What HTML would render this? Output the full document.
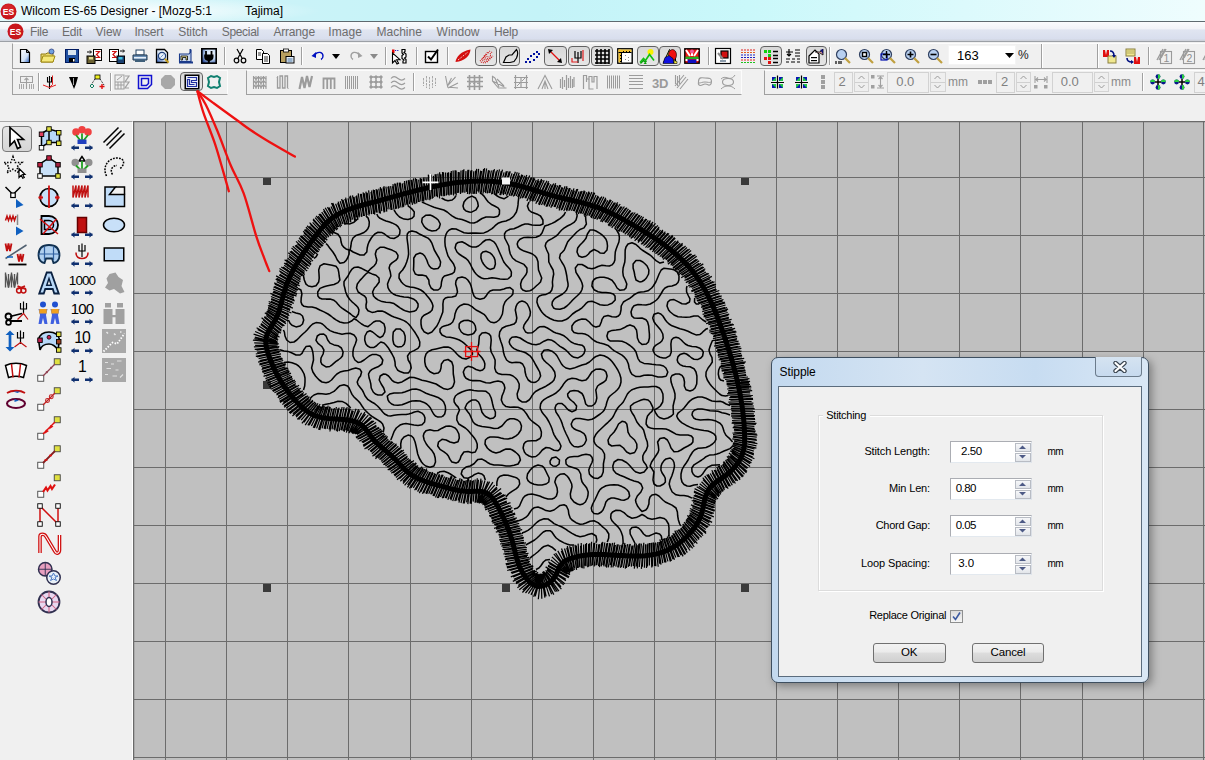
<!DOCTYPE html>
<html><head><meta charset="utf-8"><style>
*{margin:0;padding:0;box-sizing:border-box}
html,body{width:1205px;height:760px;overflow:hidden;background:#f0f0f0;font-family:"Liberation Sans",sans-serif}
.abs{position:absolute}
#title{left:0;top:0;width:1205px;height:22px;background:radial-gradient(ellipse 170px 14px at 150px 11px,rgba(255,255,255,.85),rgba(255,255,255,0)),linear-gradient(90deg,#e2f8fb 0%,#cbf3f8 22%,#c4f3f8 45%,#caf8fa 62%,#dcfafc 80%,#effdfe 100%);border-bottom:1px solid #5f6a70}
#menu{left:0;top:22px;width:1205px;height:20px;background:linear-gradient(#fafbfd 0%,#f2f3f8 35%,#e0e5f1 42%,#d8deed 90%,#cfd3dc 95%);border-bottom:1px solid #9ca0a6}
.ic{position:absolute;width:16px;height:16px;overflow:visible}
.pb{position:absolute;border:1.6px solid #626262;border-radius:4px;background:linear-gradient(#d8d8d8,#e6e6e6)}
#left{left:0;top:121px;width:133px;height:639px;background:#f0f0f0;border-right:1px solid #fff;border-top:1px solid #a8a8a8}
#canvas{left:133px;top:121px}
.dlg{position:absolute;left:771px;top:357px;width:378px;height:326px;border:1px solid #3e4f60;border-radius:7px;background:linear-gradient(90deg,#c3d9ef,#d5e4f3 40%,#c7dcf1 70%,#d9e7f5);box-shadow:3px 3px 8px rgba(0,0,0,.35)}
.tbx{position:absolute;background:#fff;border:1px solid #c6c6c6;border-top-color:#abadb3;border-left-color:#abadb3}
.spn{position:absolute;border:1px solid #c6c6c6;background:#f4f4f4}
.btn{position:absolute;border:1px solid #707070;border-radius:3px;background:linear-gradient(#f2f2f2 0%,#ebebeb 45%,#dddddd 50%,#cfcfcf 100%)}
</style></head><body>
<div id="title" class="abs"></div>
<svg class="abs" style="left:0;top:3px" width="17" height="17" viewBox="0 0 17 17"><circle cx="8.5" cy="8.5" r="8" fill="#c8161c"/><circle cx="8.5" cy="7" r="6" fill="#e0383a" opacity=".5"/><text x="8.5" y="12" font-size="8.5" font-weight="bold" fill="#fff" text-anchor="middle" font-family="Liberation Sans">ES</text></svg>
<span id="tx0" style="position:absolute;left:21.0px;top:5.0px;font-size:12px;color:#000;white-space:pre;letter-spacing:-0.012px;line-height:1;">Wilcom ES-65 Designer - [Mozg-5:1</span>
<span id="tx1" style="position:absolute;left:245.0px;top:5.0px;font-size:12px;color:#000;white-space:pre;letter-spacing:-0.002px;line-height:1;">Tajima]</span>
<div id="menu" class="abs"></div>
<svg class="abs" style="left:7px;top:23px" width="17" height="17" viewBox="0 0 17 17"><circle cx="8.5" cy="8.5" r="8" fill="#c8161c"/><text x="8.5" y="12" font-size="8.5" font-weight="bold" fill="#fff" text-anchor="middle" font-family="Liberation Sans">ES</text></svg>
<span id="tx2" style="position:absolute;left:29.9px;top:26.0px;font-size:12px;color:#6d6d6d;white-space:pre;letter-spacing:-0.286px;line-height:1;">File</span>
<span id="tx3" style="position:absolute;left:62.0px;top:26.0px;font-size:12px;color:#6d6d6d;white-space:pre;letter-spacing:-0.172px;line-height:1;">Edit</span>
<span id="tx4" style="position:absolute;left:95.6px;top:26.0px;font-size:12px;color:#6d6d6d;white-space:pre;letter-spacing:-0.049px;line-height:1;">View</span>
<span id="tx5" style="position:absolute;left:134.4px;top:26.0px;font-size:12px;color:#6d6d6d;white-space:pre;letter-spacing:-0.186px;line-height:1;">Insert</span>
<span id="tx6" style="position:absolute;left:178.3px;top:26.0px;font-size:12px;color:#6d6d6d;white-space:pre;letter-spacing:-0.136px;line-height:1;">Stitch</span>
<span id="tx7" style="position:absolute;left:221.7px;top:26.0px;font-size:12px;color:#6d6d6d;white-space:pre;letter-spacing:-0.308px;line-height:1;">Special</span>
<span id="tx8" style="position:absolute;left:273.4px;top:26.0px;font-size:12px;color:#6d6d6d;white-space:pre;letter-spacing:-0.172px;line-height:1;">Arrange</span>
<span id="tx9" style="position:absolute;left:328.3px;top:26.0px;font-size:12px;color:#6d6d6d;white-space:pre;letter-spacing:0.068px;line-height:1;">Image</span>
<span id="tx10" style="position:absolute;left:376.5px;top:26.0px;font-size:12px;color:#6d6d6d;white-space:pre;letter-spacing:-0.008px;line-height:1;">Machine</span>
<span id="tx11" style="position:absolute;left:436.6px;top:26.0px;font-size:12px;color:#6d6d6d;white-space:pre;letter-spacing:0.052px;line-height:1;">Window</span>
<span id="tx12" style="position:absolute;left:494.1px;top:26.0px;font-size:12px;color:#6d6d6d;white-space:pre;letter-spacing:-0.172px;line-height:1;">Help</span>
<div class="tbx0" style="position:absolute;left:11.5px;top:43.0px;width:1194.5px;height:26.0px;border-left:1px solid #a0a0a0;border-bottom:1px solid #a0a0a0;border-top:1px solid #fcfcfc;border-right:1px solid #fcfcfc"></div>
<div class="tbx0" style="position:absolute;left:12.0px;top:70.0px;width:216.0px;height:25.0px;border-left:1px solid #a0a0a0;border-bottom:1px solid #a0a0a0;border-top:1px solid #fcfcfc;border-right:1px solid #fcfcfc"></div>
<div class="tbx0" style="position:absolute;left:246.0px;top:70.0px;width:496.0px;height:25.0px;border-left:1px solid #a0a0a0;border-bottom:1px solid #a0a0a0;border-top:1px solid #fcfcfc;border-right:1px solid #fcfcfc"></div>
<div class="tbx0" style="position:absolute;left:764.0px;top:70.0px;width:442.0px;height:25.0px;border-left:1px solid #a0a0a0;border-bottom:1px solid #a0a0a0;border-top:1px solid #fcfcfc;border-right:1px solid #fcfcfc"></div>
<div style="position:absolute;left:223.5px;top:47.0px;width:1px;height:18.0px;background:#a0a0a0;box-shadow:1px 0 0 #fff"></div>
<div style="position:absolute;left:300.5px;top:47.0px;width:1px;height:18.0px;background:#a0a0a0;box-shadow:1px 0 0 #fff"></div>
<div style="position:absolute;left:385.0px;top:47.0px;width:1px;height:18.0px;background:#a0a0a0;box-shadow:1px 0 0 #fff"></div>
<div style="position:absolute;left:416.0px;top:47.0px;width:1px;height:18.0px;background:#a0a0a0;box-shadow:1px 0 0 #fff"></div>
<div style="position:absolute;left:447.0px;top:47.0px;width:1px;height:18.0px;background:#a0a0a0;box-shadow:1px 0 0 #fff"></div>
<div style="position:absolute;left:708.0px;top:47.0px;width:1px;height:18.0px;background:#a0a0a0;box-shadow:1px 0 0 #fff"></div>
<div style="position:absolute;left:829.0px;top:47.0px;width:1px;height:18.0px;background:#a0a0a0;box-shadow:1px 0 0 #fff"></div>
<div style="position:absolute;left:1041.0px;top:44.0px;width:1px;height:24.0px;background:#a0a0a0;box-shadow:1px 0 0 #fff"></div>
<div style="position:absolute;left:1097.0px;top:44.0px;width:1px;height:24.0px;background:#a0a0a0;box-shadow:1px 0 0 #fff"></div>
<div style="position:absolute;left:1148.0px;top:47.0px;width:1px;height:18.0px;background:#a0a0a0;box-shadow:1px 0 0 #fff"></div>
<div style="position:absolute;left:38.0px;top:73.0px;width:1px;height:18.0px;background:#a0a0a0;box-shadow:1px 0 0 #fff"></div>
<div style="position:absolute;left:109.5px;top:73.0px;width:1px;height:18.0px;background:#a0a0a0;box-shadow:1px 0 0 #fff"></div>
<div style="position:absolute;left:412.5px;top:73.0px;width:1px;height:18.0px;background:#a0a0a0;box-shadow:1px 0 0 #fff"></div>
<div style="position:absolute;left:1141.5px;top:73.0px;width:1px;height:18.0px;background:#a0a0a0;box-shadow:1px 0 0 #fff"></div>
<div class="pb" style="left:475.3px;top:45.5px;width:22.2px;height:20.5px"></div>
<div class="pb" style="left:498.6px;top:45.5px;width:21.9px;height:20.5px"></div>
<div class="pb" style="left:544.0px;top:45.5px;width:22.5px;height:20.5px"></div>
<div class="pb" style="left:567.5px;top:45.5px;width:22.0px;height:20.5px"></div>
<div class="pb" style="left:590.5px;top:45.5px;width:22.5px;height:20.5px"></div>
<div class="pb" style="left:636.5px;top:45.5px;width:22.0px;height:20.5px"></div>
<div class="pb" style="left:659.3px;top:45.5px;width:22.2px;height:20.5px"></div>
<div class="pb" style="left:760.0px;top:45.5px;width:21.5px;height:20.5px"></div>
<div class="pb" style="left:805.8px;top:45.5px;width:21.7px;height:20.5px"></div>
<div class="pb" style="left:180.3px;top:71.9px;width:22.4px;height:18.9px"></div>
<div class="abs" style="left:23px;top:126px;width:31px;height:26px"></div>
<svg class="ic" style="left:17px;top:48px;width:16px;height:16px" viewBox="0 0 16 16"><defs><linearGradient id="gnew" x1="0" y1="0" x2="1" y2="1"><stop offset="0" stop-color="#fff"/><stop offset=".6" stop-color="#cfe0f5"/><stop offset="1" stop-color="#2a60c0"/></linearGradient></defs><path d="M3.5 1.5h6l3 3v10h-9z" fill="url(#gnew)" stroke="#000" stroke-width="1.2"/><path d="M9.5 1.5v3h3" fill="none" stroke="#000"/></svg>
<svg class="ic" style="left:40px;top:48px;width:16px;height:16px" viewBox="0 0 16 16"><path d="M1 6h5l1-1h6v9H1z" fill="#e8d870" stroke="#907a10"/><path d="M1 14l2-6h12l-2 6z" fill="#f5e87a" stroke="#a08a10"/><circle cx="11.5" cy="3.5" r="2.5" fill="#6fa0e0" stroke="#304080" stroke-width=".8"/></svg>
<svg class="ic" style="left:64px;top:48px;width:16px;height:16px" viewBox="0 0 16 16"><rect x="1.5" y="1.5" width="13" height="13" fill="#2050a0" stroke="#001a60"/><rect x="4" y="2" width="8" height="5" fill="#d8e4f0"/><rect x="5" y="10" width="6" height="4" fill="#000"/><rect x="9" y="11" width="1.5" height="2.5" fill="#fff"/></svg>
<svg class="ic" style="left:86px;top:48px;width:16px;height:16px" viewBox="0 0 16 16"><rect x="7.5" y="1.5" width="8" height="11" fill="#fff" stroke="#000"/><path d="M9.5 3.5h4l-3 3 3 3h-4" fill="none" stroke="#d01010" stroke-width="1.2"/><rect x="1" y="8" width="8" height="7.5" fill="#6a6030" stroke="#000"/><rect x="3" y="9" width="4" height="2.5" fill="#e0d890"/><path d="M1 4h4M4 2.5l1.5 1.5L4 5.5" stroke="#000" fill="none"/></svg>
<svg class="ic" style="left:109px;top:48px;width:16px;height:16px" viewBox="0 0 16 16"><rect x="0.5" y="1.5" width="9" height="12" fill="#fff" stroke="#000"/><path d="M3 3.5h4l-3 3 3 3H3" fill="none" stroke="#d01010" stroke-width="1.2"/><rect x="8" y="8" width="7.5" height="7.5" fill="#1a4070" stroke="#000"/><rect x="9.5" y="9" width="4" height="2.5" fill="#40c0e0"/><path d="M11 3h4M14 1.5l1.5 1.5L14 4.5" stroke="#000" fill="none"/></svg>
<svg class="ic" style="left:132px;top:48px;width:16px;height:16px" viewBox="0 0 16 16"><rect x="4" y="2" width="8" height="5" fill="#fff" stroke="#204060"/><path d="M1 7h14v5H1z" fill="#6a90b8" stroke="#203850"/><rect x="2" y="9" width="12" height="1.5" fill="#e8f0f8"/><rect x="3" y="12" width="10" height="2" fill="#40607a"/></svg>
<svg class="ic" style="left:155px;top:48px;width:16px;height:16px" viewBox="0 0 16 16"><defs><linearGradient id="gpv" x1="1" y1="0" x2="0" y2="1"><stop offset="0" stop-color="#ffffff"/><stop offset=".55" stop-color="#d8e6f6"/><stop offset="1" stop-color="#2a5ab8"/></linearGradient></defs><path d="M1.5 1.5h8l3 3v10h-11z" fill="url(#gpv)" stroke="#000" stroke-width="1.3"/><circle cx="7" cy="8" r="3.6" fill="#e8f0fa" stroke="#20407a" stroke-width="1.2"/><path d="M5.5 9.5l3-3" stroke="#5080c0" stroke-width=".8"/><path d="M9.8 10.8l3.8 3.8" stroke="#c8a020" stroke-width="2"/></svg>
<svg class="ic" style="left:178px;top:48px;width:16px;height:16px" viewBox="0 0 16 16"><path d="M1 13.5h14v2H1z" fill="#1a3a8a"/><path d="M1.5 6h9.5l2-3v10.5H1.5z" fill="#c8d8f0" stroke="#1a3a8a" stroke-width="1.1"/><path d="M3 8h6.5v4H8V9.5H4.5V12H3z" fill="#f8f0a0" stroke="#000" stroke-width=".8"/><rect x="11.5" y="1" width="1.6" height="3" fill="#1a3a8a"/></svg>
<svg class="ic" style="left:201px;top:48px;width:16px;height:16px" viewBox="0 0 16 16"><defs><radialGradient id="gpl" cx=".65" cy=".35" r=".8"><stop offset="0" stop-color="#ffffff"/><stop offset=".5" stop-color="#c0d8f4"/><stop offset="1" stop-color="#1a3a8a"/></radialGradient></defs><rect x="0.8" y="0.8" width="14.4" height="14.4" fill="url(#gpl)" stroke="#000" stroke-width="1.6"/><path d="M5 3v4M10.5 3v4" stroke="#000" stroke-width="1.8"/><path d="M3.2 6.5h9.3v2.5c0 2.5-2 4-4.6 4s-4.7-1.5-4.7-4z" fill="#000"/><rect x="6.8" y="12" width="2" height="3" fill="#000"/></svg>
<svg class="ic" style="left:232px;top:48px;width:16px;height:16px" viewBox="0 0 16 16"><path d="M5 1l5 9M11 1l-5 9" stroke="#000" stroke-width="1.2" fill="none"/><circle cx="4.5" cy="12.5" r="2.3" fill="none" stroke="#000" stroke-width="1.2"/><circle cx="11.5" cy="12.5" r="2.3" fill="none" stroke="#000" stroke-width="1.2"/></svg>
<svg class="ic" style="left:255px;top:48px;width:16px;height:16px" viewBox="0 0 16 16"><path d="M1.5 1.5h5l2 2v8h-7z" fill="#fff" stroke="#000"/><path d="M7.5 5.5h5l2 2v8h-7z" fill="#fff" stroke="#000"/><path d="M3 5h3M3 7h3M9 9h4M9 11h4M9 13h4" stroke="#000" stroke-width=".8"/></svg>
<svg class="ic" style="left:279px;top:48px;width:16px;height:16px" viewBox="0 0 16 16"><rect x="1.5" y="2.5" width="11" height="12" fill="#b8a060" stroke="#000"/><rect x="4.5" y="1" width="5" height="3" fill="#fff" stroke="#000" stroke-width=".8"/><rect x="7" y="8.5" width="8" height="6.5" fill="#e8f0f8" stroke="#000"/><path d="M8.5 11h5M8.5 13h5" stroke="#4070a0"/></svg>
<svg class="ic" style="left:310px;top:48px;width:16px;height:16px" viewBox="0 0 16 16"><path d="M5 6.5C8 3 13 4 13 8c0 2-1 3-2 3.5" fill="none" stroke="#0010c0" stroke-width="1.4"/><path d="M1.5 8L6 4v6z" fill="#0010c0"/></svg>
<svg class="ic" style="left:328px;top:48px;width:16px;height:16px" viewBox="0 0 16 16"><path d="M4 6h8l-4 5z" fill="#000"/></svg>
<svg class="ic" style="left:348px;top:48px;width:16px;height:16px" viewBox="0 0 16 16"><path d="M11 6.5C8 3 3 4 3 8c0 2 1 3 2 3.5" fill="none" stroke="#a0a0a0" stroke-width="1.4"/><path d="M14.5 8L10 4v6z" fill="#a0a0a0"/></svg>
<svg class="ic" style="left:366px;top:48px;width:16px;height:16px" viewBox="0 0 16 16"><path d="M4 6h8l-4 5z" fill="#8a8a8a"/></svg>
<svg class="ic" style="left:392px;top:48px;width:16px;height:16px" viewBox="0 0 16 16"><rect x="0" y="1.5" width="2.5" height="3.5" fill="#e00000"/><path d="M3 2.5h4" stroke="#2020c0" stroke-width="1" stroke-dasharray="1.2 1"/><path d="M0.5 5v10l2.5-2.5 2 3.5 1.6-.8-2-3.5h3.4z" fill="#fff" stroke="#000" stroke-width="1.1"/><path d="M10 1.5h3v2l-1 1 2 1.5v3l-1.5 1 1.5 1.5v3.5h-3v-2l1-1-2-1.5v-3l1.5-1-1.5-1.5z" fill="#fff" stroke="#000" stroke-width="1.2"/></svg>
<svg class="ic" style="left:424px;top:48px;width:16px;height:16px" viewBox="0 0 16 16"><rect x="1.5" y="3.5" width="12" height="11" fill="#fff" stroke="#000" stroke-width="1.4"/><path d="M4 8.5l3 3 7-10" fill="none" stroke="#000" stroke-width="2"/></svg>
<svg class="ic" style="left:455px;top:48px;width:16px;height:16px" viewBox="0 0 16 16"><path d="M0.5 14C1 9 6 3 15.5 1.5 15 8 10 13 0.5 14z" fill="#d41010"/><path d="M3 12L13 4" stroke="#fff" stroke-width="1" stroke-dasharray="1 1.2"/></svg>
<svg class="ic" style="left:478px;top:48px;width:16px;height:16px" viewBox="0 0 16 16"><g stroke="#d01818" stroke-width="1.1" stroke-dasharray="1 1"><path d="M2 13L7 8M3 14.5l7-7M5 15l8-8M7 15l7-7M9 14l6-6M4 11l5-5M6 8l4-4M10 5l2-2M12 6l2-2"/></g></svg>
<svg class="ic" style="left:502px;top:48px;width:16px;height:16px" viewBox="0 0 16 16"><path d="M1.5 14.5L4 9l3-2 3 0 4.5-5.5c1.5 2 1.5 5 0 8.5L12 13.5 8 14.5z" fill="none" stroke="#000" stroke-width="1.2"/></svg>
<svg class="ic" style="left:524px;top:48px;width:16px;height:16px" viewBox="0 0 16 16"><g fill="#0010a0"><rect x="1" y="13" width="2" height="2"/><rect x="3" y="10" width="2" height="2"/><rect x="5" y="13" width="2" height="2"/><rect x="6" y="7" width="2" height="2"/><rect x="9" y="11" width="2" height="2"/><rect x="9" y="5" width="2" height="2"/><rect x="12" y="8" width="2" height="2"/><rect x="12" y="3" width="2" height="2"/><rect x="14" y="5" width="2" height="2"/></g></svg>
<svg class="ic" style="left:547px;top:48px;width:16px;height:16px" viewBox="0 0 16 16"><path d="M3 3l10 10" stroke="#e01010" stroke-width="1.2"/><path d="M1 1l5 1-4 4zM15 15l-5-1 4-4z" fill="#000"/></svg>
<svg class="ic" style="left:570px;top:48px;width:16px;height:16px" viewBox="0 0 16 16"><path d="M8 4v11M5 3v7h6V3" fill="none" stroke="#000" stroke-width="1.2"/><path d="M2 10v4h6M13 2v11" fill="none" stroke="#e02020" stroke-width="1.2"/></svg>
<svg class="ic" style="left:594px;top:48px;width:16px;height:16px" viewBox="0 0 16 16"><g stroke="#000" stroke-width="1.6"><path d="M1 3h14M1 7h14M1 11h14M1 15h14M3 1v15M7 1v15M11 1v15M15 1v15"/></g></svg>
<svg class="ic" style="left:617px;top:48px;width:16px;height:16px" viewBox="0 0 16 16"><rect x="0.8" y="0.8" width="14.4" height="14.4" fill="#fff" stroke="#000" stroke-width="1.4"/><rect x="1.5" y="1.5" width="13" height="2.5" fill="#f0c030"/><rect x="1.5" y="1.5" width="2.5" height="13" fill="#f0c030"/><path d="M1.5 4.5h13M4.5 4.5v10" stroke="#000" stroke-width="1"/><g fill="#000"><rect x="6" y="3" width="1" height="1"/><rect x="9" y="3" width="1" height="1"/><rect x="12" y="3" width="1" height="1"/><rect x="3" y="7" width="1" height="1"/><rect x="3" y="10" width="1" height="1"/><rect x="3" y="13" width="1" height="1"/></g><g fill="#888"><rect x="8" y="7" width="1" height="1"/><rect x="11" y="9" width="1" height="1"/><rect x="8" y="11" width="1" height="1"/><rect x="11" y="12" width="1" height="1"/></g></svg>
<svg class="ic" style="left:639px;top:48px;width:16px;height:16px" viewBox="0 0 16 16"><circle cx="11.5" cy="4" r="3" fill="#f8f000"/><path d="M1 14.5l3.5-4 2 2 4-6 4.5 6" fill="none" stroke="#10c010" stroke-width="1.6"/><path d="M1.5 15.5l3-3 3 3M5 15.5l2.5-2.5" fill="none" stroke="#08a008" stroke-width="1.4"/></svg>
<svg class="ic" style="left:662px;top:48px;width:16px;height:16px" viewBox="0 0 16 16"><path d="M1.5 14.5l6-13 6 9v4z" fill="#f8f040" stroke="#000" stroke-width="1"/><ellipse cx="10.5" cy="7" rx="4" ry="5.5" fill="#f01010" stroke="#000" stroke-width=".6"/><path d="M1 15.5l2-6 4-2 4 3 1 5z" fill="#1010e0" stroke="#000" stroke-width=".6"/><path d="M12 12.5l3 1v2h-3z" fill="#f8f040" stroke="#000" stroke-width=".6"/></svg>
<svg class="ic" style="left:684px;top:48px;width:16px;height:16px" viewBox="0 0 16 16"><rect x="0.8" y="0.8" width="14.4" height="14.4" fill="#f01818" stroke="#000" stroke-width="1.4"/><path d="M2 2l4 6M14 2l-4 6M8 2v6" stroke="#fff" stroke-width="2"/><circle cx="8" cy="3.5" r="2" fill="#f060a0"/><path d="M1.5 9c2-1 4 0 6.5 0s4.5-1 6.5 0v2H1.5z" fill="#20b020"/><path d="M3 11.5h10l-1 3.5H4z" fill="#1010c0"/><path d="M1.5 12h2M12.5 12h2" stroke="#fff" stroke-width="2"/></svg>
<svg class="ic" style="left:715px;top:48px;width:16px;height:16px" viewBox="0 0 16 16"><rect x="0.5" y="0.5" width="15" height="15" fill="#fff" stroke="#000" stroke-width="1.2"/><rect x="6" y="3" width="7" height="7" fill="#d01010" stroke="#000" stroke-width="1.2"/><path d="M3 5l5 6" stroke="#888" stroke-width="2"/><rect x="5" y="12" width="6" height="2" fill="#8a9aaa"/></svg>
<svg class="ic" style="left:740px;top:48px;width:16px;height:16px" viewBox="0 0 16 16"><g stroke-width="1.2" stroke-dasharray="2 1"><path d="M1 2h14" stroke="#e02020"/><path d="M1 4.5h14" stroke="#e06020"/><path d="M1 7h14" stroke="#2020c0"/><path d="M1 9.5h14" stroke="#2020c0"/><path d="M1 12h14" stroke="#e02020"/><path d="M1 14.5h14" stroke="#20c020"/></g></svg>
<svg class="ic" style="left:763px;top:48px;width:16px;height:16px" viewBox="0 0 16 16"><rect x="1" y="2" width="3" height="3" fill="#10d010"/><rect x="5" y="2" width="3" height="3" fill="#10d010"/><rect x="5" y="6" width="3" height="3" fill="#10d010"/><rect x="1" y="9" width="3" height="3" fill="#e01010"/><rect x="5" y="9" width="3" height="3" fill="#e01010"/><rect x="5" y="13" width="3" height="3" fill="#e01010"/><path d="M10 3.5h5M10 7.5h5M10 10.5h5M10 14.5h5" stroke="#000" stroke-width="1.4"/></svg>
<svg class="ic" style="left:785px;top:48px;width:16px;height:16px" viewBox="0 0 16 16"><path d="M1 4h7M4 1v7M2 6l2 2 2-2M1 11h4M7 11h3M12 11h3M1 14h3M6 14h4M12 14h3M10 2h5M10 5h5M10 8h5" stroke="#000" stroke-width="1.2" fill="none"/></svg>
<svg class="ic" style="left:808px;top:48px;width:16px;height:16px" viewBox="0 0 16 16"><path d="M1 8l6-6 4 4v9H1z" fill="#fff" stroke="#000" stroke-width="1.2"/><rect x="3" y="9" width="6" height="1.2" fill="#000"/><rect x="3" y="12" width="6" height="1.2" fill="#000"/><path d="M7 4h5l3-3v6l-3-2" fill="#e8a0a0" stroke="#000" stroke-width=".8"/><path d="M12 2l3-1v5z" fill="#101070"/></svg>
<svg class="ic" style="left:835px;top:48px;width:16px;height:16px" viewBox="0 0 16 16"><circle cx="6.5" cy="6.5" r="5" fill="#b8d0f0" stroke="#304060" stroke-width="1.2"/><path d="M1 13v3M4 13v3M6 13v3" stroke="#000" stroke-width="1.2"/><path d="M10 10l5 5" stroke="#c0a040" stroke-width="2.2"/></svg>
<svg class="ic" style="left:858px;top:48px;width:16px;height:16px" viewBox="0 0 16 16"><circle cx="6.5" cy="6.5" r="5" fill="#b8d0f0" stroke="#304060" stroke-width="1.2"/><rect x="4.5" y="4.5" width="4" height="4" fill="#fff" stroke="#000" stroke-width="1.4"/><path d="M10 10l5 5" stroke="#c0a040" stroke-width="2.2"/></svg>
<svg class="ic" style="left:880px;top:48px;width:16px;height:16px" viewBox="0 0 16 16"><circle cx="6.5" cy="6.5" r="5" fill="#b8d0f0" stroke="#304060" stroke-width="1.2"/><rect x="1" y="6" width="6" height="6" fill="none" stroke="#0010b0" stroke-width="1.2"/><path d="M6.5 3v7M3 6.5h7" stroke="#000" stroke-width="1.4"/><path d="M10 10l5 5" stroke="#c0a040" stroke-width="2.2"/></svg>
<svg class="ic" style="left:904px;top:48px;width:16px;height:16px" viewBox="0 0 16 16"><circle cx="6.5" cy="6.5" r="5" fill="#b8d0f0" stroke="#304060" stroke-width="1.2"/><path d="M6.5 3.5v6M3.5 6.5h6" stroke="#000" stroke-width="1.6"/><path d="M10 10l5 5" stroke="#c0a040" stroke-width="2.2"/></svg>
<svg class="ic" style="left:927px;top:48px;width:16px;height:16px" viewBox="0 0 16 16"><circle cx="6.5" cy="6.5" r="5" fill="#b8d0f0" stroke="#304060" stroke-width="1.2"/><path d="M3.5 6.5h6" stroke="#000" stroke-width="1.6"/><path d="M10 10l5 5" stroke="#c0a040" stroke-width="2.2"/></svg>
<svg class="ic" style="left:1102px;top:48px;width:16px;height:16px" viewBox="0 0 16 16"><path d="M1 2h2l1 5 1-5h2v7H1z" fill="#e01010"/><rect x="6" y="8" width="8" height="7" fill="#f0e890" stroke="#8a8040"/><path d="M8 3c3 0 4 2 4 5" fill="none" stroke="#001080" stroke-width="1.6"/><path d="M10 7h4l-2 3z" fill="#001080"/></svg>
<svg class="ic" style="left:1125px;top:48px;width:16px;height:16px" viewBox="0 0 16 16"><rect x="1" y="1" width="9" height="7" fill="#f0e890" stroke="#8a8040"/><path d="M2 3h7M2 5h7" stroke="#8a8040" stroke-width=".6"/><path d="M9 9h2l1 5 1-5h2v7H9z" fill="#e01010"/><path d="M2 10c0 3 2 4 5 4" fill="none" stroke="#001080" stroke-width="1.6"/><path d="M6 12v4l3-2z" fill="#001080"/></svg>
<svg class="ic" style="left:1156px;top:48px;width:16px;height:16px" viewBox="0 0 16 16"><rect x="4.5" y="3.5" width="11" height="12" fill="none" stroke="#9a9a9a" stroke-width="1.1"/><path d="M1 12L7 1M3 12l6-11M5 10l5-9" stroke="#9c9c9c" stroke-width="1.4"/><text x="10.3" y="14" font-size="10.5" fill="#909090" text-anchor="middle" font-family="Liberation Sans">1</text></svg>
<svg class="ic" style="left:1179px;top:48px;width:16px;height:16px" viewBox="0 0 16 16"><rect x="4.5" y="3.5" width="11" height="12" fill="none" stroke="#9a9a9a" stroke-width="1.1"/><path d="M1 12L7 1M3 12l6-11M5 10l5-9" stroke="#9c9c9c" stroke-width="1.4"/><text x="10.3" y="14" font-size="10.5" fill="#909090" text-anchor="middle" font-family="Liberation Sans">2</text></svg>
<svg class="ic" style="left:1202px;top:48px;width:16px;height:16px" viewBox="0 0 16 16"><rect x="4.5" y="3.5" width="11" height="12" fill="none" stroke="#9a9a9a" stroke-width="1.1"/><path d="M1 12L7 1M3 12l6-11M5 10l5-9" stroke="#9c9c9c" stroke-width="1.4"/><text x="10.3" y="14" font-size="10.5" fill="#909090" text-anchor="middle" font-family="Liberation Sans">1</text></svg>
<svg class="ic" style="left:18px;top:74px;width:16px;height:16px" viewBox="0 0 16 16"><rect x="2.5" y="2.5" width="12" height="6" fill="none" stroke="#a0a0a0"/><path d="M8.5 4v11M6.5 6l2-2 2 2" fill="none" stroke="#a0a0a0" stroke-width="1.1"/><path d="M1.5 10v5M3.5 10v5M5.5 10v5M11.5 10v5M13.5 10v5M15.5 10v5" stroke="#a8a8a8" stroke-width="1"/></svg>
<svg class="ic" style="left:42px;top:74px;width:16px;height:16px" viewBox="0 0 16 16"><path d="M7.5 2v13M5.5 3v5h4V3" fill="none" stroke="#000" stroke-width="1.1"/><path d="M10.5 1.5v9l-3 3M1 11l6.5 2.5M14 11l-6.5 2.5" fill="none" stroke="#e02020" stroke-width="1"/></svg>
<svg class="ic" style="left:66px;top:74px;width:16px;height:16px" viewBox="0 0 16 16"><path d="M3 3h9l-2 7-2 5-2-5z" fill="#000"/><path d="M7.5 4v7" stroke="#aaa" stroke-width="1"/></svg>
<svg class="ic" style="left:89px;top:74px;width:16px;height:16px" viewBox="0 0 16 16"><rect x="6" y="1" width="5" height="4" fill="#f0f020" stroke="#000" stroke-width=".8"/><path d="M6 5l-4 6M11 5l4 6" stroke="#000" stroke-width="1" stroke-dasharray="1 1"/><path d="M1 12l2-2 2 2-2 2z" fill="none" stroke="#108060"/><path d="M13 10v5M10.5 12.5h5" stroke="#e01010" stroke-width="1.4"/></svg>
<svg class="ic" style="left:114px;top:74px;width:16px;height:16px" viewBox="0 0 16 16"><rect x="1" y="1" width="9" height="14" fill="none" stroke="#a0a0a0"/><path d="M1 8h9M1 11h9M4 8v7M7 8v7M3 6l5-4" stroke="#a0a0a0"/><path d="M11 2h4l-4 6h4l-4 6h4" fill="none" stroke="#a0a0a0" stroke-width="1.2"/></svg>
<svg class="ic" style="left:137px;top:74px;width:16px;height:16px" viewBox="0 0 16 16"><path d="M1.5 1.5h13v9l-4 4h-9z" fill="none" stroke="#1010d0" stroke-width="1.5"/><path d="M4.5 4.5h7v5l-2 2h-5z" fill="none" stroke="#1010d0" stroke-width="1.5"/></svg>
<svg class="ic" style="left:160px;top:74px;width:16px;height:16px" viewBox="0 0 16 16"><path d="M5 1h6l4 4v6l-4 4H5l-4-4V5z" fill="#a8a8a8"/></svg>
<svg class="ic" style="left:184px;top:74px;width:16px;height:16px" viewBox="0 0 16 16"><rect x="0.5" y="0.5" width="15" height="15" fill="#000"/><rect x="2" y="2" width="12" height="12" fill="#e8ecf8"/><path d="M3.5 3.5h9v3h-5v2h5v4h-9V5.5h2v5h5" fill="none" stroke="#2030a0" stroke-width="1.2"/></svg>
<svg class="ic" style="left:206px;top:74px;width:16px;height:16px" viewBox="0 0 16 16"><path d="M2 4l3-2 3 1 3-1 3 2-1 4 1 4-3 2-3-1-3 1-3-2 1-4z" fill="none" stroke="#108070" stroke-width="2"/></svg>
<svg class="ic" style="left:252px;top:74px;width:16px;height:16px" viewBox="0 0 16 16"><g fill="none" stroke="#9c9c9c" stroke-width="1.1"><path d="M1.5 2v13M4 2v13M6.5 2v13M9 2v13M11.5 2v13M14 2v13"/><path d="M1.5 3l2.5 2 2.5-2 2.5 2 2.5-2 2.5 2M1.5 7l2.5 2 2.5-2 2.5 2 2.5-2 2.5 2M1.5 11l2.5 2 2.5-2 2.5 2 2.5-2 2.5 2" stroke-width="1.6"/></g></svg>
<svg class="ic" style="left:275px;top:74px;width:16px;height:16px" viewBox="0 0 16 16"><path d="M2.5 3v11h2.5V2h2.5v12h2.5V2h2.5v12" fill="none" stroke="#9c9c9c" stroke-width="1.3"/><path d="M2 3.5l1 -1.5M12.5 14l1 1" stroke="#9c9c9c"/></svg>
<svg class="ic" style="left:298px;top:74px;width:16px;height:16px" viewBox="0 0 16 16"><path d="M1.5 15l2.5-12 2.5 11 2.5-12 2.5 11 2.5-11" fill="none" stroke="#9c9c9c" stroke-width="2.2"/></svg>
<svg class="ic" style="left:321px;top:74px;width:16px;height:16px" viewBox="0 0 16 16"><path d="M2.5 15V4.5h11V15M6.2 4.5V15M9.8 4.5V15" fill="none" stroke="#9c9c9c" stroke-width="1.8"/></svg>
<svg class="ic" style="left:344px;top:74px;width:16px;height:16px" viewBox="0 0 16 16"><path d="M1.5 2v13M3.5 2v13M5.5 2v13M7.5 2v13M9.5 2v13M11.5 2v13M13.5 2v13" stroke="#9c9c9c" stroke-width="1"/></svg>
<svg class="ic" style="left:368px;top:74px;width:16px;height:16px" viewBox="0 0 16 16"><g fill="#9c9c9c"><path d="M3 1l2 2-2 2-2-2zM8 1l2 2-2 2-2-2zM13 1l2 2-2 2-2-2zM3 6l2 2-2 2-2-2zM8 6l2 2-2 2-2-2zM13 6l2 2-2 2-2-2zM3 11l2 2-2 2-2-2zM8 11l2 2-2 2-2-2zM13 11l2 2-2 2-2-2z"/><path d="M2 2.3h12v1.4H2zM2 7.3h12v1.4H2zM2 12.3h12v1.4H2zM2.3 2h1.4v12H2.3zM7.3 2h1.4v12H7.3zM12.3 2h1.4v12h-1.4z"/></g></svg>
<svg class="ic" style="left:390px;top:74px;width:16px;height:16px" viewBox="0 0 16 16"><path d="M1 4.5C3 2 5 2 8 4.5s5 2 7 0M1 9C3 6.5 5 6.5 8 9s5 2 7 0M1 13.5C3 11 5 11 8 13.5s5 2 7 0" fill="none" stroke="#9c9c9c" stroke-width="1.1"/></svg>
<svg class="ic" style="left:421px;top:74px;width:16px;height:16px" viewBox="0 0 16 16"><path d="M2.5 4v8M5.5 2v12M8.5 3v12M11.5 2v12M14.5 4v8" stroke="#a8a8a8" stroke-width="1" stroke-dasharray="2.5 1"/></svg>
<svg class="ic" style="left:444px;top:74px;width:16px;height:16px" viewBox="0 0 16 16"><path d="M1.5 2l2 10 4-8M3.5 12l8-9M4 14l10-5M3 13l11 1" fill="none" stroke="#9c9c9c" stroke-width="1.1"/></svg>
<svg class="ic" style="left:467px;top:74px;width:16px;height:16px" viewBox="0 0 16 16"><path d="M0 3.5h16M0 7.5h16M0 12.5h16M2.5 1v15M7.5 1v15M12.5 1v15" stroke="#9c9c9c" stroke-width="1.6"/><path d="M3 10l2-3 2 3 2-3 2 3 2-3" fill="none" stroke="#9c9c9c"/></svg>
<svg class="ic" style="left:491px;top:74px;width:16px;height:16px" viewBox="0 0 16 16"><path d="M1.5 2v5l6 7h8M1.5 7l12 6M4 4l4 9M1 2l3 2M6 5l7 7" fill="none" stroke="#9c9c9c" stroke-width="1.1"/></svg>
<svg class="ic" style="left:513px;top:74px;width:16px;height:16px" viewBox="0 0 16 16"><path d="M2.5 1v14M13.5 1v14M1 3.5h14M1 8.5h14M1 13.5h14M8 3v11" fill="none" stroke="#9c9c9c" stroke-width="1.2"/><path d="M4 12l3-3M9 7l3-3" stroke="#9c9c9c"/></svg>
<svg class="ic" style="left:537px;top:74px;width:16px;height:16px" viewBox="0 0 16 16"><path d="M1 15L8 1.5 15 15M5 15l3-8 3 8M8 7v8" fill="none" stroke="#9c9c9c" stroke-width="1.1"/></svg>
<svg class="ic" style="left:559px;top:74px;width:16px;height:16px" viewBox="0 0 16 16"><path d="M1.5 5v9M3.5 3v12M5.5 6v7M7.5 1v15M9.5 4v10M11.5 2v12M13.5 5v9M15 3v10" stroke="#9c9c9c" stroke-width="1.2"/></svg>
<svg class="ic" style="left:582px;top:74px;width:16px;height:16px" viewBox="0 0 16 16"><path d="M1.5 15V1.5h3V8M4.5 5h2.5V2.5h3V8h2V2.5h3V15" fill="none" stroke="#9c9c9c" stroke-width="1.2"/><path d="M7 5v10h4.5" fill="none" stroke="#9c9c9c" stroke-width="1.2"/></svg>
<svg class="ic" style="left:605px;top:74px;width:16px;height:16px" viewBox="0 0 16 16"><path d="M2.5 1.5v13M4.5 1.5v13M6.5 1.5v13M8.5 1.5v13M10.5 1.5v13M12.5 1.5v13M14.5 1.5v13" stroke="#9c9c9c" stroke-width="1"/></svg>
<svg class="ic" style="left:628px;top:74px;width:16px;height:16px" viewBox="0 0 16 16"><path d="M1 1.5h14M1 4.5h14M1 7.5h14M1 10.5h14M1 14.5h14" stroke="#9c9c9c" stroke-width="1.1"/></svg>
<svg class="ic" style="left:652px;top:74px;width:16px;height:16px" viewBox="0 0 16 16"><text x="8" y="14" font-size="13" font-weight="bold" fill="#9a9a9a" text-anchor="middle" font-family="Liberation Sans" letter-spacing="-.3">3D</text></svg>
<svg class="ic" style="left:674px;top:74px;width:16px;height:16px" viewBox="0 0 16 16"><path d="M1.5 1v9M3.5 2v10M5.5 1v9M1 12l9-11M3 14l9-11M6 15l8-10" fill="none" stroke="#9c9c9c" stroke-width="1.1"/></svg>
<svg class="ic" style="left:697px;top:74px;width:16px;height:16px" viewBox="0 0 16 16"><path d="M1.5 7.5C1.5 3 5 3.5 8 4s6.5-1 6.5 3.5c0 3-2 4-3 3.5s-2-1-3.5-1-3 1.5-4.5 1.5-2.5-1-2-4z" fill="none" stroke="#9c9c9c" stroke-width="1.1"/><path d="M2 9c2 0 3-1 6-1s4 1 6 0" fill="none" stroke="#9c9c9c"/></svg>
<svg class="ic" style="left:720px;top:74px;width:16px;height:16px" viewBox="0 0 16 16"><path d="M2.5 8c0-3 2.5-3.5 5.5-3.5s5.5.5 5.5 3.5-2.5 3.5-5.5 3.5-5.5-.5-5.5-3.5z" fill="none" stroke="#9c9c9c" stroke-width="1.1"/><path d="M1 5c2-2 4-2 7-1s5 0 7-3M1 15c2-2 4-3 7-3s5 1 7 3" fill="none" stroke="#9c9c9c"/></svg>
<svg class="ic" style="left:770px;top:74px;width:16px;height:16px" viewBox="0 0 16 16"><rect x="2" y="3" width="4" height="4" fill="#0a14b4"/><path d="M2 7h4v-4z" fill="#22c846"/><rect x="9" y="3" width="4" height="4" fill="#0a14b4"/><path d="M9 7h4v-4z" fill="#22c846"/><rect x="2" y="10" width="4" height="4" fill="#0a14b4"/><path d="M2 10h4v4z" fill="#22c846"/><rect x="9" y="10" width="4" height="4" fill="#0a14b4"/><path d="M9 10h4v4z" fill="#22c846"/><path d="M7.5 1.5v13M1 8.5h13" stroke="#000" stroke-width="1.2"/></svg>
<svg class="ic" style="left:794px;top:74px;width:16px;height:16px" viewBox="0 0 16 16"><rect x="2" y="3" width="4" height="4" fill="#0a14b4"/><path d="M2 7h4v-4z" fill="#22c846"/><rect x="9" y="3" width="4" height="4" fill="#0a14b4"/><path d="M9 7h4L9 3z" fill="#22c846"/><rect x="2" y="10" width="4" height="4" fill="#0a14b4"/><path d="M2 10h4L2 14z" fill="#22c846"/><rect x="9" y="10" width="4" height="4" fill="#0a14b4"/><path d="M9 10h4v4z" fill="#22c846"/><path d="M7.5 1.5v13M1 8.5h13" stroke="#000" stroke-width="1.2"/></svg>
<svg class="ic" style="left:815px;top:74px;width:16px;height:16px" viewBox="0 0 16 16"><rect x="6" y="1" width="4" height="4" fill="#a0a0a0"/><rect x="6" y="6" width="4" height="4" fill="#a0a0a0"/><rect x="6" y="11" width="4" height="4" fill="#a0a0a0"/></svg>
<svg class="ic" style="left:870px;top:74px;width:16px;height:16px" viewBox="0 0 16 16"><rect x="1" y="1" width="3.5" height="3.5" fill="#a0a0a0"/><rect x="1" y="11" width="3.5" height="3.5" fill="#a0a0a0"/><path d="M7 2h7M10.5 2v12M7 14h7M8.5 5l2-2 2 2M8.5 11l2 2 2-2" fill="none" stroke="#a0a0a0" stroke-width="1.1"/></svg>
<svg class="ic" style="left:977px;top:74px;width:16px;height:16px" viewBox="0 0 16 16"><rect x="1" y="6" width="4" height="4" fill="#a0a0a0"/><rect x="6" y="6" width="4" height="4" fill="#a0a0a0"/><rect x="11" y="6" width="4" height="4" fill="#a0a0a0"/></svg>
<svg class="ic" style="left:1033px;top:74px;width:16px;height:16px" viewBox="0 0 16 16"><rect x="1" y="11" width="3.5" height="3.5" fill="#a0a0a0"/><rect x="11" y="11" width="3.5" height="3.5" fill="#a0a0a0"/><path d="M2 2v7M14 2v7M2 5.5h12M5 3.5l-2 2 2 2M11 3.5l2 2-2 2" fill="none" stroke="#a0a0a0" stroke-width="1.1"/></svg>
<svg class="ic" style="left:1150px;top:74px;width:16px;height:16px" viewBox="0 0 16 16"><path d="M8 5v6M5 8h6" stroke="#000" stroke-width="1.5"/><circle cx="8" cy="2.6" r="2.4" fill="#0a1a8a"/><path d="M8 0.20000000000000018a2.4 2.4 0 0 1 0 4.8z" fill="#28d040"/><circle cx="8" cy="13.4" r="2.4" fill="#0a1a8a"/><path d="M8 11.0a2.4 2.4 0 0 1 0 4.8z" fill="#28d040"/><circle cx="2.6" cy="8" r="2.4" fill="#0a1a8a"/><path d="M0.20000000000000018 8a2.4 2.4 0 0 1 4.8 0z" fill="#28d040"/><circle cx="13.4" cy="8" r="2.4" fill="#0a1a8a"/><path d="M11.0 8a2.4 2.4 0 0 1 4.8 0z" fill="#28d040"/></svg>
<svg class="ic" style="left:1174px;top:74px;width:16px;height:16px" viewBox="0 0 16 16"><path d="M8 5v6M5 8h6" stroke="#000" stroke-width="1.5"/><circle cx="8" cy="2.6" r="2.4" fill="#0a1a8a"/><path d="M8 0.20000000000000018a2.4 2.4 0 0 1 0 4.8z" fill="#28d040"/><circle cx="8" cy="13.4" r="2.4" fill="#0a1a8a"/><path d="M8 11.0a2.4 2.4 0 0 1 0 4.8z" fill="#28d040"/><circle cx="2.6" cy="8" r="2.4" fill="#0a1a8a"/><path d="M0.20000000000000018 8a2.4 2.4 0 0 1 4.8 0z" fill="#28d040"/><circle cx="13.4" cy="8" r="2.4" fill="#0a1a8a"/><path d="M11.0 8a2.4 2.4 0 0 1 4.8 0z" fill="#28d040"/></svg>
<div class="abs" style="left:948px;top:45px;width:68px;height:20px;background:#fff;border:1px solid #f4f4f4"><span style="position:absolute;left:8px;top:2px;font-size:13px;color:#000">163</span><svg style="position:absolute;left:56px;top:7px" width="9" height="6"><path d="M0 0h9L4.5 5z" fill="#000"/></svg></div>
<span class="abs" style="left:1018px;top:48px;font-size:12px;color:#222">%</span>
<div class="abs" style="left:833.5px;top:71.5px;width:19.0px;height:21.0px;border:1px solid #d2d2d2;background:#f0f0f0"><span style="position:absolute;left:4px;top:1.5px;font-size:13px;color:#7f7f7f">2</span></div>
<div class="abs" style="left:854.4px;top:72.0px;width:14.5px;height:20.0px;border:1px solid #d4d4d4;background:#efefef"><div style="position:absolute;left:0;top:9.0px;width:100%;height:1px;background:#d0d0d0"></div><svg style="position:absolute;left:2.8px;top:2px" width="7" height="5"><path d="M0.5 4L3.5 1 6.5 4" fill="none" stroke="#9a9a9a"/></svg><svg style="position:absolute;left:2.8px;top:11.0px" width="7" height="5"><path d="M0.5 1L3.5 4 6.5 1" fill="none" stroke="#9a9a9a"/></svg></div>
<div class="abs" style="left:887.2px;top:71.5px;width:42.0px;height:21.0px;border:1px solid #d2d2d2;background:#f0f0f0"><span style="position:absolute;left:8px;top:1.5px;font-size:13px;color:#7f7f7f">0.0</span></div>
<div class="abs" style="left:930.0px;top:72.0px;width:15.5px;height:20.0px;border:1px solid #d4d4d4;background:#efefef"><div style="position:absolute;left:0;top:9.0px;width:100%;height:1px;background:#d0d0d0"></div><svg style="position:absolute;left:3.2px;top:2px" width="7" height="5"><path d="M0.5 4L3.5 1 6.5 4" fill="none" stroke="#9a9a9a"/></svg><svg style="position:absolute;left:3.2px;top:11.0px" width="7" height="5"><path d="M0.5 1L3.5 4 6.5 1" fill="none" stroke="#9a9a9a"/></svg></div>
<span class="abs" style="left:948px;top:75px;font-size:12px;color:#8a8a8a">mm</span>
<div class="abs" style="left:996.0px;top:71.5px;width:18.5px;height:21.0px;border:1px solid #d2d2d2;background:#f0f0f0"><span style="position:absolute;left:4px;top:1.5px;font-size:13px;color:#7f7f7f">2</span></div>
<div class="abs" style="left:1016.0px;top:72.0px;width:15.0px;height:20.0px;border:1px solid #d4d4d4;background:#efefef"><div style="position:absolute;left:0;top:9.0px;width:100%;height:1px;background:#d0d0d0"></div><svg style="position:absolute;left:3.0px;top:2px" width="7" height="5"><path d="M0.5 4L3.5 1 6.5 4" fill="none" stroke="#9a9a9a"/></svg><svg style="position:absolute;left:3.0px;top:11.0px" width="7" height="5"><path d="M0.5 1L3.5 4 6.5 1" fill="none" stroke="#9a9a9a"/></svg></div>
<div class="abs" style="left:1051.7px;top:71.5px;width:41.0px;height:21.0px;border:1px solid #d2d2d2;background:#f0f0f0"><span style="position:absolute;left:8px;top:1.5px;font-size:13px;color:#7f7f7f">0.0</span></div>
<div class="abs" style="left:1094.3px;top:72.0px;width:14.5px;height:20.0px;border:1px solid #d4d4d4;background:#efefef"><div style="position:absolute;left:0;top:9.0px;width:100%;height:1px;background:#d0d0d0"></div><svg style="position:absolute;left:2.8px;top:2px" width="7" height="5"><path d="M0.5 4L3.5 1 6.5 4" fill="none" stroke="#9a9a9a"/></svg><svg style="position:absolute;left:2.8px;top:11.0px" width="7" height="5"><path d="M0.5 1L3.5 4 6.5 1" fill="none" stroke="#9a9a9a"/></svg></div>
<span class="abs" style="left:1111px;top:75px;font-size:12px;color:#8a8a8a">mm</span>
<div class="abs" style="left:1193.6px;top:71.5px;width:20.0px;height:21.0px;border:1px solid #d2d2d2;background:#f0f0f0"><span style="position:absolute;left:3px;top:1.5px;font-size:13px;color:#7f7f7f">4</span></div>
<div id="left" class="abs"><div class="pb" style="left:1.5px;top:3.5px;width:30.5px;height:26px;border-color:#7a7a7a;border-radius:4px;background:linear-gradient(#e4e4e4,#d6d6d6)"></div>
<svg class="ic" style="left:4px;top:4px;width:24px;height:24px" viewBox="0 0 16 16"><path d="M4 1v12l3-3 2 5 2-1-2-5h4z" fill="#fff" stroke="#000" stroke-width="1.1"/></svg>
<svg class="ic" style="left:37px;top:4px;width:24px;height:24px" viewBox="0 0 16 16"><path d="M3 14V5l5-3 7 2v7l-7 0-5 3z" fill="#b8d8f8" stroke="#000"/><path d="M8 2v9" stroke="#000"/><rect x="1.5" y="4" width="3" height="3" fill="#e04060" stroke="#000" stroke-width=".6"/><rect x="6.5" y="0.5" width="3" height="3" fill="#e0e040" stroke="#000" stroke-width=".6"/><rect x="13" y="3" width="3" height="3" fill="#e0e040" stroke="#000" stroke-width=".6"/><rect x="6.5" y="9.5" width="3" height="3" fill="#e0e040" stroke="#000" stroke-width=".6"/><rect x="13" y="10" width="3" height="3" fill="#e0e040" stroke="#000" stroke-width=".6"/><rect x="1.5" y="13" width="3" height="3" fill="#fff" stroke="#000" stroke-width=".6"/></svg>
<svg class="ic" style="left:70px;top:4px;width:24px;height:24px" viewBox="0 0 16 16"><circle cx="4" cy="4" r="2.5" fill="#f04040"/><circle cx="8" cy="2.5" r="2.5" fill="#f04040"/><circle cx="12" cy="4" r="2.5" fill="#f04040"/><path d="M8 5v6M4 6l4 5 4-5" stroke="#20a020" stroke-width="1.2" fill="none"/><rect x="5" y="9" width="6" height="3" fill="#2040c0"/><path d="M1 14.5h5M10 14.5h5" stroke="#103070" stroke-width="1.6"/><path d="M1 14.5l2-2v4zM15 14.5l-2-2v4z" fill="#103070"/></svg>
<svg class="ic" style="left:102px;top:4px;width:24px;height:24px" viewBox="0 0 16 16"><path d="M1 11L11 1M5 15L15 5" stroke="#000" stroke-width="1"/><path d="M3 13L13 3" stroke="#000" stroke-width="1"/></svg>
<svg class="ic" style="left:4px;top:33px;width:24px;height:24px" viewBox="0 0 16 16"><path d="M6 1l1.5 4H12L8.5 8 10 12 6 9.5 2 12l1.5-4L0 5h4.5z" fill="none" stroke="#000" stroke-dasharray="1 1"/><path d="M10 9v6l1.5-1.5 1 2 1-.5-1-2H14z" fill="#fff" stroke="#000" stroke-width=".8"/></svg>
<svg class="ic" style="left:37px;top:33px;width:24px;height:24px" viewBox="0 0 16 16"><path d="M2 14V6l6-4 6 4v8z" fill="#c8e0f8" stroke="#000"/><rect x="6.5" y="0.5" width="3" height="3" fill="#c02040" stroke="#000" stroke-width=".6"/><rect x="0.5" y="5" width="3" height="3" fill="#c02040" stroke="#000" stroke-width=".6"/><rect x="12.5" y="5" width="3" height="3" fill="#a02040" stroke="#000" stroke-width=".6"/><rect x="0.5" y="12.5" width="3" height="3" fill="#fff" stroke="#000" stroke-width=".6"/><rect x="12.5" y="12.5" width="3" height="3" fill="#e0e040" stroke="#000" stroke-width=".6"/></svg>
<svg class="ic" style="left:70px;top:33px;width:24px;height:24px" viewBox="0 0 16 16"><path d="M8 1l-2 3h4z" fill="none" stroke="#000"/><circle cx="3.5" cy="5" r="2.5" fill="#909090"/><circle cx="12.5" cy="5" r="2.5" fill="#909090"/><path d="M8 4v7M4 7l4 4 4-4" stroke="#20a020" stroke-width="1.2" fill="none"/><rect x="5" y="9" width="6" height="3" fill="#909090"/><path d="M1 14.5h5M10 14.5h5" stroke="#103070" stroke-width="1.6"/><path d="M1 14.5l2-2v4zM15 14.5l-2-2v4z" fill="#103070"/></svg>
<svg class="ic" style="left:102px;top:33px;width:24px;height:24px" viewBox="0 0 16 16"><path d="M3 14C0 8 4 2 10 2s5 5 2 7" fill="none" stroke="#000" stroke-dasharray="1.2 .8"/><path d="M7 13c-2-3 0-6 3-6" fill="none" stroke="#000" stroke-dasharray="1.2 .8"/></svg>
<svg class="ic" style="left:4px;top:62px;width:24px;height:24px" viewBox="0 0 16 16"><path d="M1 2l5 5 5-5" fill="none" stroke="#000"/><rect x="4.5" y="6" width="3" height="3" fill="#fff" stroke="#000" stroke-width=".8"/><path d="M8 10v6l5-2z" fill="#1060c0"/></svg>
<svg class="ic" style="left:37px;top:62px;width:24px;height:24px" viewBox="0 0 16 16"><circle cx="8" cy="9" r="6" fill="#c8e0f8" stroke="#000" stroke-width="1.1"/><path d="M8 1v15M1 9h3M12 9h3" stroke="#d01010" stroke-width="1.2"/><path d="M1 9l2-2v4zM15 9l-2-2v4z" fill="#d01010"/></svg>
<svg class="ic" style="left:70px;top:62px;width:24px;height:24px" viewBox="0 0 16 16"><path d="M2 1v8l2-8v8l2-8v8l2-8v8l2-8v8l2-8v8" fill="none" stroke="#c01010" stroke-width="1"/><path d="M1 14.5h5M10 14.5h5" stroke="#103070" stroke-width="1.6"/><path d="M1 14.5l2-2v4zM15 14.5l-2-2v4z" fill="#103070"/></svg>
<svg class="ic" style="left:102px;top:62px;width:24px;height:24px" viewBox="0 0 16 16"><path d="M2 2h7L5 7h10v8H2z" fill="#c0dcf8" stroke="#000"/><path d="M9 2l6 0v5" fill="none" stroke="#000"/></svg>
<svg class="ic" style="left:4px;top:91px;width:24px;height:24px" viewBox="0 0 16 16"><path d="M1 5l1-3 1 3 1-3 1 3 1-3 1 3 1-3" fill="none" stroke="#c01010" stroke-width="1"/><path d="M9 1v7" stroke="#888"/><path d="M8 9v6l5-3z" fill="#1060c0"/></svg>
<svg class="ic" style="left:37px;top:91px;width:24px;height:24px" viewBox="0 0 16 16"><path d="M3 2h5a6 6 0 0 1 0 12H3z" fill="#c0dcf8" stroke="#000" stroke-width="1.2"/><path d="M5 5h3a3 3 0 0 1 0 6H5z" fill="none" stroke="#000"/><path d="M2 4l12 10M13 4L4 14" stroke="#d01010"/></svg>
<svg class="ic" style="left:70px;top:91px;width:24px;height:24px" viewBox="0 0 16 16"><path d="M5 3h6v10H5z" fill="#c01010" stroke="#600"/><path d="M1 14.5h5M10 14.5h5" stroke="#103070" stroke-width="1.6"/><path d="M1 14.5l2-2v4zM15 14.5l-2-2v4z" fill="#103070"/></svg>
<svg class="ic" style="left:102px;top:91px;width:24px;height:24px" viewBox="0 0 16 16"><ellipse cx="8" cy="8" rx="7" ry="4.5" fill="#c8e0f8" stroke="#000"/></svg>
<svg class="ic" style="left:4px;top:120px;width:24px;height:24px" viewBox="0 0 16 16"><path d="M1 1l1 5 1-5 1 5 1-5M9 8l1 5 1-5 1 5 1-5" fill="none" stroke="#c01010" stroke-width="1.2"/><path d="M1 11L15 2" stroke="#506070"/><path d="M2 10h4" stroke="#1060c0"/><path d="M3 15h12" stroke="#000" stroke-width="1.2"/></svg>
<svg class="ic" style="left:37px;top:120px;width:24px;height:24px" viewBox="0 0 16 16"><path d="M8 2c5 0 7 3 7 7 0 3-2 5-4 5l-1-3H6l-1 3C3 14 1 12 1 9c0-4 2-7 7-7z" fill="#b0d0f0" stroke="#103050" stroke-width="1.2"/><path d="M1 8h14M5 3v9M11 3v9" stroke="#3060a0" stroke-width=".8"/></svg>
<svg class="ic" style="left:70px;top:120px;width:24px;height:24px" viewBox="0 0 16 16"><path d="M8 1v9M6 2v4h4V2" fill="none" stroke="#000" stroke-width=".8"/><path d="M4 7c0 3 2 4 4 4s4-1 4-4" fill="none" stroke="#c01010"/><path d="M1 14.5h5M10 14.5h5" stroke="#103070" stroke-width="1.6"/><path d="M1 14.5l2-2v4zM15 14.5l-2-2v4z" fill="#103070"/></svg>
<svg class="ic" style="left:102px;top:120px;width:24px;height:24px" viewBox="0 0 16 16"><rect x="1.5" y="4" width="13" height="8.5" fill="#c0dcf8" stroke="#000"/></svg>
<svg class="ic" style="left:4px;top:149px;width:24px;height:24px" viewBox="0 0 16 16"><path d="M1 1v10M3 2v9M5 1v10M7 2v9M9 1v8" stroke="#555" stroke-width=".9"/><path d="M1 2l2 9 2-9 2 9 2-9" fill="none" stroke="#555" stroke-width=".9"/><circle cx="10" cy="13" r="1.6" fill="none" stroke="#c01010"/><circle cx="13" cy="13" r="1.6" fill="none" stroke="#c01010"/><path d="M9 10l5 2M14 10l-5 2" stroke="#c01010"/></svg>
<svg class="ic" style="left:37px;top:149px;width:24px;height:24px" viewBox="0 0 16 16"><path d="M1.5 15L6.5 1h3l5 14h-3l-1-3h-5l-1 3z" fill="#b8d8f8" stroke="#0a2040" stroke-width="1.2"/><path d="M6.5 9.5h3L8 5z" fill="#fff" stroke="#0a2040"/></svg>
<svg class="ic" style="left:70px;top:149px;width:24px;height:24px" viewBox="0 0 16 16"><text x="8" y="9" font-size="9" fill="#000" text-anchor="middle" font-family="Liberation Sans" letter-spacing="-.6">1000</text><path d="M1 14.5h5M10 14.5h5" stroke="#103070" stroke-width="1.6"/><path d="M1 14.5l2-2v4zM15 14.5l-2-2v4z" fill="#103070"/></svg>
<svg class="ic" style="left:102px;top:149px;width:24px;height:24px" viewBox="0 0 16 16"><path d="M5 2l4-1 2 3 3 2-1 4 2 4-3 1-4-3-3 1-3-2 2-3-1-3z" fill="#a0a0a0"/></svg>
<svg class="ic" style="left:4px;top:178px;width:24px;height:24px" viewBox="0 0 16 16"><circle cx="3" cy="11" r="2" fill="none" stroke="#000" stroke-width="1.2"/><circle cx="3" cy="15" r="1.6" fill="none" stroke="#000" stroke-width="1.2"/><path d="M4 11l8-2M4 14l8 0" stroke="#000" stroke-width="1.2"/><path d="M13 1v8M11 2v4h4V2" fill="none" stroke="#000" stroke-width=".8"/><path d="M9 13l4-4 3 4" fill="none" stroke="#c01010" stroke-width=".8"/></svg>
<svg class="ic" style="left:37px;top:178px;width:24px;height:24px" viewBox="0 0 16 16"><g><circle cx="4" cy="3" r="2" fill="#2050d0"/><path d="M1 6h6l-1 4 1 6H5l-1-4-1 4H1l1-6z" fill="#4060e0"/><rect x="1.5" y="6" width="5" height="3" fill="#f0a020"/><circle cx="12" cy="3" r="2" fill="#2050d0"/><path d="M9 6h6l-1 4 1 6h-2l-1-4-1 4H9l1-6z" fill="#4060e0"/><rect x="9.5" y="6" width="5" height="3" fill="#f0a020"/></g></svg>
<svg class="ic" style="left:70px;top:178px;width:24px;height:24px" viewBox="0 0 16 16"><text x="8" y="9" font-size="10" fill="#000" text-anchor="middle" font-family="Liberation Sans" letter-spacing="-.6">100</text><path d="M1 14.5h5M10 14.5h5" stroke="#103070" stroke-width="1.6"/><path d="M1 14.5l2-2v4zM15 14.5l-2-2v4z" fill="#103070"/></svg>
<svg class="ic" style="left:102px;top:178px;width:24px;height:24px" viewBox="0 0 16 16"><path d="M2 2h4v3H2zM1 6h6v10H1zM10 2h4v3h-4zM9 6h6v10H9zM6 10h4v1.5H6z" fill="#a0a0a0"/></svg>
<svg class="ic" style="left:4px;top:207px;width:24px;height:24px" viewBox="0 0 16 16"><path d="M4 3v10" stroke="#1060c0" stroke-width="1.8"/><path d="M1 4l3-3 3 3zM1 12l3 3 3-3z" fill="#1060c0"/><path d="M11 1v9M9 2v4h4V2" fill="none" stroke="#000" stroke-width=".8"/><path d="M7 12l4-3 4 3" fill="none" stroke="#c01010" stroke-width=".8"/></svg>
<svg class="ic" style="left:37px;top:207px;width:24px;height:24px" viewBox="0 0 16 16"><path d="M1 7c1-4 4-5 7-5s6 1 7 5l-1 7c-2-3-4-4-6-4s-5 1-6 4z" fill="#b8d8f8" stroke="#000" stroke-width="1.1"/><rect x="0.5" y="6" width="3" height="3" fill="#c02050" stroke="#000" stroke-width=".6"/><rect x="13" y="2" width="3" height="3" fill="#e0e040" stroke="#000" stroke-width=".6"/><rect x="13" y="7" width="3" height="3" fill="#a04020" stroke="#000" stroke-width=".6"/><rect x="13" y="12.5" width="3" height="3" fill="#e0e040" stroke="#000" stroke-width=".6"/><circle cx="8" cy="5.5" r="1.3" fill="#c02050" stroke="#000" stroke-width=".5"/></svg>
<svg class="ic" style="left:70px;top:207px;width:24px;height:24px" viewBox="0 0 16 16"><text x="8" y="9" font-size="10.5" fill="#000" text-anchor="middle" font-family="Liberation Sans" letter-spacing="-.6">10</text><path d="M1 14.5h5M10 14.5h5" stroke="#103070" stroke-width="1.6"/><path d="M1 14.5l2-2v4zM15 14.5l-2-2v4z" fill="#103070"/></svg>
<svg class="ic" style="left:102px;top:207px;width:24px;height:24px" viewBox="0 0 16 16"><rect x="0" y="0" width="16" height="16" fill="#a8a8a8"/><path d="M1 15l6-6 3 1 5-7" stroke="#fff" stroke-width="1.2" fill="none" stroke-dasharray="1 1"/><path d="M3 2l1 1M8 3l1 1M12 2h1" stroke="#e8e8e8"/></svg>
<svg class="ic" style="left:4px;top:236px;width:24px;height:24px" viewBox="0 0 16 16"><path d="M1 5c4-2 10-2 14 0l-2 8c-3-1-7-1-10 0z" fill="#fff" stroke="#000"/><path d="M5 4l1 9M11 4l-1 9" stroke="#c01010"/></svg>
<svg class="ic" style="left:37px;top:236px;width:24px;height:24px" viewBox="0 0 16 16"><rect x="11.5" y="0.5" width="4" height="4" fill="#e0e040" stroke="#444" stroke-width=".6"/><rect x="0.5" y="11.5" width="4" height="4" fill="#fff" stroke="#444" stroke-width=".6"/><path d="M4 12l8-8" stroke="#904050" stroke-width=".8"/><path d="M6 9l1 1M9 6l1 1" stroke="#904050"/></svg>
<svg class="ic" style="left:70px;top:236px;width:24px;height:24px" viewBox="0 0 16 16"><text x="8" y="9" font-size="10.5" fill="#000" text-anchor="middle" font-family="Liberation Sans" letter-spacing="-.6">1</text><path d="M1 14.5h5M10 14.5h5" stroke="#103070" stroke-width="1.6"/><path d="M1 14.5l2-2v4zM15 14.5l-2-2v4z" fill="#103070"/></svg>
<svg class="ic" style="left:102px;top:236px;width:24px;height:24px" viewBox="0 0 16 16"><rect x="0" y="0" width="16" height="16" fill="#a8a8a8"/><path d="M2 3h2M6 4h2M10 2h3M3 7h3M9 8h2M2 11h2M7 12h3M12 13l2-2" stroke="#e0e0e0" stroke-width=".8"/></svg>
<svg class="ic" style="left:4px;top:265px;width:24px;height:24px" viewBox="0 0 16 16"><path d="M2 4c3-2 9-2 12 0" fill="none" stroke="#c01010" stroke-width="1.2"/><path d="M6 3h5l-2 1z" fill="#1060c0"/><ellipse cx="8" cy="11" rx="6" ry="3" fill="none" stroke="#600030" stroke-width="1.4"/><path d="M7 8l3 1-3 1z" fill="#1060c0"/></svg>
<svg class="ic" style="left:37px;top:265px;width:24px;height:24px" viewBox="0 0 16 16"><rect x="11.5" y="0.5" width="4" height="4" fill="#e0e040" stroke="#444" stroke-width=".6"/><rect x="0.5" y="11.5" width="4" height="4" fill="#fff" stroke="#444" stroke-width=".6"/><path d="M4 12l8-8" stroke="#c02020" stroke-width=".8"/><circle cx="7" cy="9" r="1.3" fill="none" stroke="#c02020" stroke-width=".7"/><circle cx="9.5" cy="6.5" r="1.3" fill="none" stroke="#c02020" stroke-width=".7"/></svg>
<svg class="ic" style="left:37px;top:294px;width:24px;height:24px" viewBox="0 0 16 16"><rect x="11.5" y="0.5" width="4" height="4" fill="#e0e040" stroke="#444" stroke-width=".6"/><rect x="0.5" y="11.5" width="4" height="4" fill="#fff" stroke="#444" stroke-width=".6"/><path d="M4 12l8-8" stroke="#e01010"/><path d="M5 12l1-3 2 1zM8 9l1-3 2 1z" fill="#e01010"/></svg>
<svg class="ic" style="left:37px;top:323px;width:24px;height:24px" viewBox="0 0 16 16"><rect x="11.5" y="0.5" width="4" height="4" fill="#e0e040" stroke="#444" stroke-width=".6"/><rect x="0.5" y="11.5" width="4" height="4" fill="#fff" stroke="#444" stroke-width=".6"/><path d="M4 12l8-8" stroke="#802020" stroke-width="1.2"/><path d="M5 10l2 0M8 7h2" stroke="#e01010"/></svg>
<svg class="ic" style="left:37px;top:352px;width:24px;height:24px" viewBox="0 0 16 16"><rect x="11.5" y="0.5" width="4" height="4" fill="#e0e040" stroke="#444" stroke-width=".6"/><rect x="0.5" y="11.5" width="4" height="4" fill="#fff" stroke="#444" stroke-width=".6"/><path d="M4 12l2-3 1 2 2-3 1 2 2-3" fill="none" stroke="#e01010" stroke-width="1.4"/></svg>
<svg class="ic" style="left:37px;top:381px;width:24px;height:24px" viewBox="0 0 16 16"><path d="M2 14V2l12 12V2" fill="none" stroke="#d01010" stroke-width="1"/><rect x="0.5" y="12.5" width="3" height="3" fill="#fff" stroke="#000" stroke-width=".6"/><rect x="0.5" y="0.5" width="3" height="3" fill="#fff" stroke="#000" stroke-width=".6"/><rect x="12.5" y="12.5" width="3" height="3" fill="#fff" stroke="#000" stroke-width=".6"/><rect x="12.5" y="0.5" width="3" height="3" fill="#fff" stroke="#000" stroke-width=".6"/></svg>
<svg class="ic" style="left:37px;top:410px;width:24px;height:24px" viewBox="0 0 16 16"><path d="M2 14V3c0-2 3-2 4 0l6 10c1 2 3 1 3-1V2" fill="none" stroke="#d01010" stroke-width="2.4"/><path d="M2 14V3c0-2 3-2 4 0l6 10c1 2 3 1 3-1V2" fill="none" stroke="#fff" stroke-width=".7"/></svg>
<svg class="ic" style="left:37px;top:439px;width:24px;height:24px" viewBox="0 0 16 16"><circle cx="5.5" cy="5.5" r="4.5" fill="#e8a0c0" stroke="#303050"/><path d="M1 5.5h9M5.5 1v9" stroke="#303050" stroke-width=".6"/><circle cx="11" cy="11" r="4.5" fill="#e8f0f8" stroke="#303050"/><path d="M11 8l1 2h2l-2 1 1 2-2-1-2 1 1-2-2-1h2z" fill="none" stroke="#4070c0" stroke-width=".6"/></svg>
<svg class="ic" style="left:37px;top:468px;width:24px;height:24px" viewBox="0 0 16 16"><circle cx="8" cy="8" r="7" fill="#e8d8f0" stroke="#303050" stroke-width="1.2"/><path d="M8 1v14M1 8h14M3 3l10 10M13 3L3 13" stroke="#d06080" stroke-width=".7"/><ellipse cx="8" cy="8" rx="2" ry="3" fill="#fff" stroke="#303050"/></svg></div>
<svg id="canvas" class="abs" width="1072" height="639" viewBox="133 121 1072 639">
 <rect x="133" y="121" width="1072" height="639" fill="#c0c0c0"/>
 <rect x="133.5" y="121.5" width="1080" height="650" fill="none" stroke="#6a6a6a" stroke-width="1.5"/>
 <g stroke="#6c6c6c" stroke-width="1"><line x1="165.5" y1="122" x2="165.5" y2="760"/><line x1="226.5" y1="122" x2="226.5" y2="760"/><line x1="287.5" y1="122" x2="287.5" y2="760"/><line x1="348.5" y1="122" x2="348.5" y2="760"/><line x1="410.5" y1="122" x2="410.5" y2="760"/><line x1="471.5" y1="122" x2="471.5" y2="760"/><line x1="532.5" y1="122" x2="532.5" y2="760"/><line x1="593.5" y1="122" x2="593.5" y2="760"/><line x1="654.5" y1="122" x2="654.5" y2="760"/><line x1="715.5" y1="122" x2="715.5" y2="760"/><line x1="776.5" y1="122" x2="776.5" y2="760"/><line x1="837.5" y1="122" x2="837.5" y2="760"/><line x1="898.5" y1="122" x2="898.5" y2="760"/><line x1="959.5" y1="122" x2="959.5" y2="760"/><line x1="1020.5" y1="122" x2="1020.5" y2="760"/><line x1="1082.5" y1="122" x2="1082.5" y2="760"/><line x1="1143.5" y1="122" x2="1143.5" y2="760"/><line x1="1203.5" y1="122" x2="1203.5" y2="760"/><line x1="133" y1="177.5" x2="1205" y2="177.5"/><line x1="133" y1="235.5" x2="1205" y2="235.5"/><line x1="133" y1="293.5" x2="1205" y2="293.5"/><line x1="133" y1="351.5" x2="1205" y2="351.5"/><line x1="133" y1="409.5" x2="1205" y2="409.5"/><line x1="133" y1="467.5" x2="1205" y2="467.5"/><line x1="133" y1="525.5" x2="1205" y2="525.5"/><line x1="133" y1="583.5" x2="1205" y2="583.5"/><line x1="133" y1="641.5" x2="1205" y2="641.5"/><line x1="133" y1="699.5" x2="1205" y2="699.5"/><line x1="133" y1="757.5" x2="1205" y2="757.5"/></g>
 <g fill="#3a3a3a"><rect x="263" y="178" width="8" height="7"/><rect x="502" y="178" width="8" height="7"/><rect x="741" y="178" width="8" height="7"/><rect x="263" y="381" width="8" height="8"/><rect x="741" y="381" width="8" height="8"/><rect x="263" y="584" width="8" height="8"/><rect x="502" y="584" width="8" height="8"/><rect x="741" y="584" width="8" height="8"/></g>
 <path d="M346.0 223.6L350.0 223.9L354.0 222.2L356.0 220.5L358.0 218.4M366.0 216.2L368.0 217.8L369.3 222.0L369.0 226.0L368.0 228.4L366.0 230.9L364.0 232.5L360.4 234.0L356.0 235.4L353.0 238.0L351.4 242.0L350.9 246.0L350.1 250.0L353.1 252.0L356.0 253.2L360.0 255.0L364.0 255.1L366.8 252.0L367.2 248.0L368.0 244.5L369.0 242.0L371.3 238.0L372.9 236.0L374.8 234.0L378.0 232.3L382.0 232.6L384.6 234.0L387.0 236.0L390.0 237.9L394.0 238.5L398.0 236.4L399.7 234.0L400.0 230.2L398.0 226.7L396.0 224.9L392.0 222.9L389.6 222.0L386.0 220.9L383.6 220.0L380.0 218.3L378.0 216.5L376.8 214.0M394.0 210.0L396.0 213.2L398.0 215.5L400.0 217.3L404.0 219.1L408.0 219.4L412.0 218.3L414.0 216.2L414.3 212.0L412.0 209.1L410.0 207.4L408.0 205.9M494.0 193.7L497.3 196.0L500.0 197.6L504.0 198.8L508.0 196.3L508.2 196.0M518.7 198.0L518.2 202.0L518.0 204.9L517.5 208.0L516.4 212.0L514.0 215.7L512.0 217.7L510.0 219.2L506.0 221.0L502.0 221.7L498.0 223.3L496.0 224.9L494.0 226.8L492.0 228.6L488.0 231.2L484.0 232.9L480.0 233.2L476.0 233.1L472.0 233.1L468.0 233.2L464.0 232.8L460.0 230.9L456.0 229.0L452.0 228.8L449.2 230.0L447.2 232.0L446.0 234.4L445.0 238.0L444.9 242.0L445.2 246.0L446.0 249.1L446.8 252.0L448.0 255.9L450.0 259.2L452.0 261.8L453.6 264.0L455.1 268.0L454.3 272.0L452.0 273.8L448.0 274.9L444.4 276.0L442.6 278.0L441.5 282.0L441.1 286.0L440.0 288.5L438.0 290.0L434.0 290.1L431.1 288.0L429.2 284.0L428.8 280.0L426.1 276.0L422.0 275.1L418.0 275.1L415.3 274.0L413.5 270.0L413.7 266.0L413.8 262.0L413.8 258.0L416.0 254.5L420.0 253.1L422.7 254.0L424.7 256.0L426.8 260.0L428.0 263.5L429.3 266.0L431.2 268.0L434.0 269.1L438.0 268.4L440.0 266.0L440.6 262.0L439.0 258.0L436.6 254.0L434.3 250.0L432.9 246.0L432.0 243.4L430.0 240.0L428.0 238.1L424.0 236.2L420.0 234.3L416.2 232.0L412.0 230.9L408.8 232.0L407.3 234.0L407.0 238.0L407.5 242.0L408.0 245.7L408.4 250.0L408.6 254.0L408.0 257.6L406.7 262.0L405.1 266.0L402.6 270.0L400.7 272.0L399.2 274.0L399.0 278.0L401.4 282.0L403.3 284.0L406.0 286.0L410.0 287.1L414.0 287.5L418.0 288.8L420.8 290.0L423.6 292.0L425.6 294.0L427.2 296.0L428.9 298.0L430.4 300.0L432.0 302.8L433.0 306.0L432.1 310.0L430.2 312.0L428.0 313.2L424.0 315.2L422.0 317.3L421.0 320.0L421.0 324.0L421.7 328.0L424.0 331.7L428.0 333.7L431.9 332.0L433.6 330.0L435.2 328.0L436.9 326.0L438.9 322.0L440.0 319.3L441.3 316.0L442.8 312.0L443.0 308.0L442.9 304.0L443.5 300.0L445.4 298.0L448.0 297.2L452.0 297.1L455.8 296.0L457.5 292.0L456.8 288.0L455.6 284.0L456.0 280.9L457.7 278.0L462.0 276.9L465.5 278.0L467.8 280.0L470.0 283.3L471.1 286.0L472.0 289.5L472.6 292.0L474.0 295.9L475.9 298.0L480.0 299.2L484.0 298.2L486.0 296.1L488.0 293.0L490.0 291.1L493.1 290.0L495.8 290.0L500.0 290.1L504.0 288.9L506.5 288.0L510.0 287.6L513.1 290.0L512.9 294.0L511.3 296.0L508.9 298.0L506.6 300.0L505.0 302.0L503.4 306.0L503.0 310.0L502.4 314.0L500.5 318.0L499.0 320.0L496.5 322.0L494.0 322.8L490.5 322.0L488.2 320.0L486.0 316.6L484.0 314.3L480.0 312.0L476.1 310.0L474.0 308.4L472.0 306.7L468.0 304.4L464.0 304.0L460.0 305.7L458.0 307.6L456.4 310.0L455.0 314.0L454.4 318.0L452.7 322.0L450.5 324.0L448.0 325.0L444.3 326.0L442.0 326.9L440.0 329.1L440.0 332.0L442.0 335.0L446.0 336.9L450.0 337.2L453.4 338.0L456.0 338.8L459.3 340.0L462.0 341.6L464.0 343.2L466.0 345.0L468.0 346.9L470.0 348.8L472.0 351.0L472.5 354.0L470.0 357.3L466.0 359.1L462.0 358.2L458.9 356.0L456.9 354.0L455.1 352.0L453.2 350.0L450.6 348.0L448.0 347.1L444.0 347.1L440.0 348.0L436.0 348.9L432.0 349.8L428.0 351.8L426.0 354.0L424.8 358.0L424.8 362.0L425.6 366.0L428.0 369.8L430.0 371.8L434.0 373.7L438.0 373.1L440.0 371.2L441.0 368.0L441.4 364.0L444.0 360.4L448.0 359.5L451.8 362.0L453.1 366.0L453.2 370.0L453.3 374.0L454.0 378.0L454.5 382.0L453.2 386.0L451.6 388.0L448.0 389.4L444.0 388.8L440.0 386.5L436.1 384.0L432.0 382.7L429.6 382.0L426.0 381.1L422.0 380.2L418.0 378.8L414.0 377.4L410.0 377.3L406.0 379.5L402.0 381.9L398.0 382.9L394.4 382.0L392.0 380.3L390.2 378.0L388.5 376.0L386.0 374.3L383.5 374.0L380.2 376.0L379.2 380.0L381.2 384.0L383.7 388.0L385.0 392.0L382.0 395.0L378.0 395.0L375.3 394.0L373.2 392.0L371.2 388.0L370.8 384.0L370.0 380.6L369.1 378.0L368.5 374.0L370.0 371.1L372.0 369.4L374.9 368.0L378.0 366.8L381.9 364.0L382.8 360.0L380.1 356.0L376.0 354.4L372.0 354.6L369.2 356.0L366.6 358.0L364.1 360.0L360.7 362.0L358.0 362.4L354.9 360.0L353.0 356.0L352.9 352.0L353.6 348.0L355.3 344.0L356.6 340.0L356.0 337.6L354.0 335.0L350.0 333.3L346.0 333.6L342.0 334.2L338.0 333.3L334.0 332.2L330.0 330.6L326.6 328.0L324.7 326.0L322.4 324.0L320.0 322.9L316.0 322.6L312.7 324.0L310.5 326.0L308.8 328.0L307.1 330.0L305.1 332.0L302.8 334.0L300.7 336.0L298.8 338.0L296.8 340.0L294.0 342.0L290.0 342.5L286.7 340.0L285.0 336.0L284.4 332.0L283.4 330.0M280.0 349.8L284.0 350.9L288.0 351.4L292.0 353.0L296.0 355.0L300.0 355.0L302.0 353.4L303.7 350.0L306.0 346.6L310.0 346.0L311.6 348.0L312.8 352.0L313.3 356.0L313.5 360.0L312.5 364.0L311.6 368.0L312.9 372.0L315.5 376.0L317.3 378.0L319.2 380.0L322.0 382.0L326.0 382.8L328.8 382.0L331.5 380.0L333.2 378.0L334.9 376.0L336.9 374.0L340.0 372.1L344.0 371.0L348.0 370.5L352.0 369.1L355.8 368.0L360.0 369.3L361.6 372.0L360.5 376.0L358.9 378.0L357.2 382.0L358.0 384.6L360.0 387.2L362.0 389.7L363.3 392.0L365.1 396.0L368.0 399.7L371.7 402.0L374.0 403.2L377.5 406.0L379.4 408.0L381.1 410.0L382.7 412.0L384.6 414.0L388.0 415.8L390.6 416.0L394.0 415.3L398.0 414.7L402.0 414.5L406.0 414.6L408.7 414.0L412.0 412.9L414.4 412.0L418.0 411.3L422.0 413.1L424.0 415.3L425.0 418.0L424.6 422.0L422.0 424.8L418.0 425.4L414.0 425.1L410.0 424.3L406.0 423.5L403.0 424.0L400.0 425.1L396.3 428.0L394.0 431.7L392.4 436.0L390.8 440.0M400.9 448.0L400.7 444.0L401.5 440.0L404.0 437.0L408.0 435.1L411.5 436.0L413.5 438.0L415.1 442.0L416.0 445.8L416.9 450.0L417.7 454.0L419.2 458.0L421.5 462.0L423.2 464.0L425.7 466.0L430.0 467.2L433.9 466.0L435.5 462.0L435.2 458.0L434.1 454.0L432.0 450.6L430.0 448.5L428.0 446.3L426.3 444.0L424.2 440.0L423.3 436.0L424.0 433.3L426.0 430.7L430.0 429.7L434.0 430.7L438.0 430.5L442.0 428.2L446.0 426.3L449.1 426.0L452.0 426.6L455.1 428.0L456.9 430.0L458.9 434.0L459.3 438.0L458.0 441.7L454.0 443.1L450.0 442.0L446.2 440.0L442.0 439.3L438.5 442.0L437.7 446.0L440.0 449.3L444.0 451.8L446.8 454.0L448.4 456.0L450.0 459.4L451.9 462.0L456.0 463.1L458.3 462.0L460.0 459.4L461.1 456.0L463.9 452.0L468.0 451.5L472.0 452.7L475.3 452.0L477.2 448.0L477.2 444.0L476.0 440.7L474.3 438.0L472.7 436.0L471.0 434.0L469.4 432.0L467.6 430.0L465.3 428.0L462.0 426.0L458.8 424.0L456.8 420.0L457.0 416.0L458.0 413.6L459.5 410.0L458.0 406.9L456.0 404.9L454.2 402.0L454.0 399.2L455.4 396.0L457.8 394.0L461.8 392.0L466.0 390.6L470.0 389.8L474.0 390.5L478.0 390.9L482.0 390.9L486.0 391.3L489.3 394.0L491.2 398.0L492.0 401.2L492.6 404.0L493.6 408.0L495.4 412.0L495.3 416.0L493.5 418.0L490.0 418.7L486.0 416.8L484.0 415.0L482.0 412.2L480.8 408.0L480.0 405.1L478.5 402.0L476.0 400.1L472.1 400.0L468.8 402.0L466.8 404.0L465.0 408.0L467.9 412.0L469.5 414.0L471.3 418.0L473.1 422.0L475.0 424.0L478.0 425.5L482.0 426.6L486.0 426.9L490.0 427.4L494.0 428.4L498.0 428.2L501.9 426.0L503.6 424.0L505.2 422.0L507.2 420.0L510.0 418.8L514.0 418.7L517.6 420.0L520.0 422.0L521.5 426.0L520.9 430.0L518.2 434.0L516.0 435.9L512.3 438.0L508.0 438.9L504.0 438.7L500.8 438.0L498.0 437.3L494.0 437.0L490.0 437.1L487.6 438.0L485.4 440.0L485.0 444.0L487.3 448.0L489.4 450.0L492.0 451.7L496.0 452.9L499.8 452.0L503.6 450.0L506.0 449.1L510.0 449.1L512.4 450.0L515.3 452.0L517.6 454.0L519.3 456.0L520.4 460.0L518.1 464.0L514.0 465.3L510.0 465.9L506.0 465.9L502.0 465.3L498.0 465.0L494.0 464.9L490.2 464.0L488.0 462.8L486.0 461.3L482.0 459.1L478.0 459.4L476.0 461.4L474.0 463.8L470.1 466.0L466.0 467.1L462.3 470.0L461.2 474.0L464.0 477.7L468.0 478.2L472.0 476.3L474.0 474.8L478.0 473.1L481.9 474.0L484.0 475.9L485.3 480.0M456.3 478.0L454.0 476.3L450.3 474.0L448.0 472.8L444.0 471.3L440.0 471.7L438.0 473.2M514.0 509.1L517.5 508.0L519.5 506.0L521.2 502.0L523.1 498.0L524.9 496.0L528.0 494.5L532.0 494.1L536.0 494.9L539.7 496.0L542.0 497.0L544.5 498.0L548.0 499.0L552.0 498.9L554.4 498.0L556.4 496.0L557.5 492.0L557.1 488.0L556.0 485.1L554.8 482.0L556.0 478.1L557.7 476.0L560.0 474.3L564.0 473.7L567.1 476.0L568.7 478.0L570.0 480.3L571.7 484.0L572.0 486.9L571.2 490.0L570.3 494.0L570.8 498.0L574.0 502.0L577.5 504.0L580.0 504.7L582.9 504.0L585.4 502.0L587.3 498.0L588.0 495.0L588.2 492.0L586.7 488.0L585.2 486.0L583.5 484.0L582.0 481.8L581.0 478.0L580.7 474.0L578.6 470.0L576.0 468.4L572.0 467.2L568.2 466.0L566.1 464.0L565.8 460.0L567.6 458.0L570.0 456.9L574.0 456.6L578.0 456.4L582.0 455.1L586.0 454.2L590.0 455.1L592.0 457.3L592.7 460.0L592.0 462.5L590.2 466.0L588.8 470.0L589.4 474.0L591.1 476.0L594.0 478.0L598.0 478.4L601.6 476.0L603.2 472.0L603.4 468.0L603.4 464.0L604.0 460.7L604.6 458.0L604.5 454.0L602.3 450.0L600.0 448.2L597.0 446.0L595.2 444.0L594.0 441.4L594.0 438.1L596.0 434.2L597.8 432.0L599.8 430.0L601.9 428.0L604.0 426.0L606.0 424.1L608.0 422.3L610.0 420.4L612.0 418.3L613.5 416.0L615.4 412.0L617.7 408.0L619.4 406.0L621.5 404.0L623.3 402.0L625.4 398.0L627.4 394.0L629.1 392.0L631.5 390.0L634.0 388.9L636.7 388.0L640.0 387.3L644.0 387.1L648.0 386.9L652.0 386.4L656.0 386.5L659.4 388.0L661.2 390.0L662.9 394.0L663.1 398.0L662.7 402.0L660.3 406.0L658.0 407.9L654.3 410.0L656.0 413.5L657.7 416.0L660.0 417.8L664.0 418.9L667.8 418.0L671.4 416.0L673.4 414.0L673.2 410.0L673.1 406.0L674.0 402.0L675.0 398.0L675.0 394.0L674.0 390.3L672.4 386.0L671.1 382.0L670.7 378.0L672.0 375.5L675.6 374.0L679.2 374.0L682.0 375.4L683.7 378.0L684.5 382.0L684.3 386.0L686.0 389.8L690.0 391.0L692.9 390.0L695.0 388.0L696.7 384.0L696.9 380.0L696.9 376.0L696.0 372.0L694.0 368.7L690.0 366.8L686.0 366.6L683.0 366.0L680.0 364.6L678.0 362.4L677.2 360.0L678.0 356.6L680.0 354.6L684.0 353.2L686.5 354.0L689.3 356.0L691.7 358.0L694.0 359.2L698.0 359.4L700.8 358.0L702.6 356.0L703.3 352.0L702.0 349.9L700.0 348.3L696.0 346.8L692.0 346.4L688.0 345.5L685.3 344.0L683.2 342.0L681.3 340.0L678.8 338.0L676.0 337.2L673.4 338.0L671.5 340.0L670.9 344.0L671.1 348.0L671.3 352.0L670.0 355.6L666.0 357.9L663.3 358.0L660.0 357.2L657.3 356.0L654.7 354.0L652.9 350.0L654.0 347.0L656.0 345.2L660.0 342.7L662.0 340.8L663.2 338.0L662.8 334.0L660.7 330.0L659.0 328.0L657.3 326.0L655.6 324.0L654.0 321.8L652.7 318.0L654.0 314.3L658.0 312.9L660.8 314.0L662.9 316.0L665.4 320.0L667.0 322.0L669.1 324.0L672.0 325.8L676.0 327.3L680.0 328.7L684.0 329.7L688.0 331.3L692.0 333.3L696.0 334.9L700.0 334.4L702.0 332.8L704.0 330.8L706.0 329.1L708.0 328.4M712.7 340.0L711.0 344.0L710.0 346.6L709.0 350.0L710.0 353.9L712.0 357.6L712.3 362.0L710.0 365.6L708.1 368.0L706.1 372.0L705.9 376.0L707.3 380.0L709.9 384.0L711.5 386.0L713.4 388.0L715.4 390.0L717.4 392.0L719.6 394.0L722.0 395.6L725.5 396.0L728.0 395.4M724.0 381.1L720.6 380.0L719.1 378.0L718.3 374.0L718.7 370.0L720.0 367.1L721.1 366.0M664.0 261.9L660.0 263.1L656.0 260.6L654.0 258.7L652.0 256.7L650.0 255.0L646.0 252.5L642.1 250.0L640.0 248.3L638.0 246.3L636.0 244.5L632.0 242.8L628.0 244.0L626.0 247.0L625.2 250.0L625.1 254.0L625.1 258.0L624.8 262.0L624.0 264.8L623.1 268.0L622.8 272.0L623.3 276.0L625.2 280.0L626.8 284.0L626.0 288.0L624.0 289.8L620.0 290.3L617.1 288.0L614.9 284.0L612.0 280.3L608.0 278.3L604.0 277.3L600.0 277.2L596.4 278.0L594.0 279.5L592.4 282.0L591.9 286.0L594.0 289.7L598.0 291.8L602.0 292.5L606.0 292.5L610.0 292.9L613.3 294.0L615.0 296.0L615.2 300.0L612.0 303.2L608.0 304.9L604.0 305.2L600.0 304.8L596.0 302.9L592.0 301.2L588.0 301.8L586.0 303.4L584.0 305.7L582.0 307.8L578.9 310.0L576.0 311.5L572.5 314.0L570.5 316.0L568.4 318.0L566.0 319.6L562.0 321.0L558.0 321.0L554.0 320.2L550.0 318.5L546.0 316.1L544.0 314.4L542.0 312.2L540.5 310.0L538.2 306.0L536.9 302.0L537.4 298.0L539.3 296.0L542.0 295.0L546.0 294.4L550.0 292.5L551.8 290.0L552.7 286.0L552.4 282.0L552.9 278.0L553.7 274.0L553.1 270.0L550.8 266.0L548.8 262.0L548.7 258.0L548.6 254.0L546.7 250.0L545.2 246.0L546.0 243.0L548.0 240.8L552.0 238.6L556.0 236.1L558.0 234.3L559.9 232.0L561.7 230.0L564.0 228.1L567.4 226.0L570.0 224.8L574.0 222.4L576.0 220.1L577.1 216.0L577.0 214.0M476.7 222.0L479.7 220.0L482.0 218.5L486.0 217.0L490.0 217.0L494.0 217.2L498.0 216.2L499.4 214.0L499.5 210.0L498.0 207.9L494.6 206.0L492.0 204.8L488.3 202.0L486.7 200.0L484.0 196.1L482.0 194.1L480.0 193.0M456.0 195.7L454.5 198.0L452.2 200.0L448.0 200.8L445.2 200.0L442.0 198.3L441.6 198.0M421.9 202.0L426.0 203.9L430.0 205.6L434.0 207.2L436.5 208.0L440.0 208.9L443.8 210.0L447.2 212.0L449.6 214.0L452.0 215.9L455.6 218.0L458.0 218.8L462.0 219.6L466.0 221.1L470.0 222.7L474.0 222.9L476.7 222.0M470.0 212.3L466.0 211.0L464.0 209.2L463.0 206.0L464.0 202.0L466.0 199.5L468.0 197.8L472.0 196.1L475.6 198.0L477.6 202.0L478.3 206.0L476.0 209.9L472.0 211.9L470.0 212.3M530.0 290.8L526.0 291.2L522.8 290.0L521.1 288.0L520.6 284.0L521.8 280.0L524.0 277.1L526.0 274.5L527.0 272.0L526.9 268.0L524.0 264.4L520.0 262.6L516.0 260.9L512.5 258.0L510.3 254.0L509.3 250.0L508.8 246.0L506.8 242.0L504.7 238.0L504.5 234.0L506.0 231.4L510.0 229.2L514.0 228.7L518.0 227.0L522.0 225.0L525.0 224.0L528.0 223.9L532.0 224.9L536.0 225.2L540.0 225.3L543.0 224.0L542.9 220.0L540.5 216.0L538.0 214.6L534.0 213.1L531.2 212.0L528.9 210.0L527.4 206.0L529.0 202.0M565.5 212.0L564.0 214.9L562.0 216.9L560.0 218.6L557.8 220.0L554.8 222.0L552.0 223.4L548.0 225.0L544.8 226.0L543.2 230.0L542.0 233.0L540.0 235.5L536.0 237.3L532.0 237.5L528.0 237.2L524.0 237.4L520.0 239.3L518.0 241.5L517.2 244.0L518.0 246.9L520.0 249.0L524.0 251.1L527.0 252.0L530.0 253.0L532.5 254.0L535.1 256.0L536.7 258.0L538.0 261.7L538.2 266.0L538.5 270.0L540.0 273.8L541.7 278.0L540.5 282.0L538.5 284.0L536.2 286.0L534.1 288.0L532.0 289.7L530.0 290.8M564.1 308.0L566.9 306.0L569.0 304.0L570.9 302.0L572.7 300.0L574.8 298.0L577.0 296.0L579.1 294.0L580.8 292.0L582.0 289.5L582.7 286.0L582.0 283.0L580.7 280.0L578.3 276.0L576.0 272.3L575.3 268.0L578.0 264.4L582.0 264.5L584.8 266.0L587.9 268.0L592.0 268.8L594.8 268.0L598.0 266.5L602.0 265.3L606.0 265.8L609.4 266.0L612.0 264.9L614.0 262.6L614.9 260.0L615.0 256.0L615.3 252.0L616.0 249.5L617.3 246.0L618.9 242.0L619.4 238.0L618.9 234.0L616.6 230.0L614.6 228.0M585.6 216.0L585.8 220.0L586.4 224.0L584.0 227.9L580.0 229.5L576.8 232.0L574.9 234.0L573.0 236.0L571.1 238.0L569.2 240.0L567.6 242.0L566.0 245.9L564.3 250.0L562.5 252.0L560.4 254.0L559.5 258.0L561.7 262.0L564.0 265.7L565.0 268.0L566.0 272.0L566.8 276.0L567.3 280.0L568.0 283.4L568.1 286.0L566.6 290.0L564.9 292.0L562.6 294.0L560.0 295.5L556.0 297.7L554.0 299.3L552.3 302.0L552.0 305.0L553.6 308.0L556.0 309.1L560.0 309.3L564.0 308.1L564.1 308.0M326.0 243.4L328.0 245.6L329.7 248.0L331.3 250.0L332.9 252.0L335.4 256.0L337.3 260.0L340.0 263.3L344.0 262.4L346.0 260.7L347.6 258.0L349.1 254.0L349.1 250.0L346.0 248.9L344.0 247.4L342.0 244.9L341.1 242.0L340.5 238.0L338.0 234.3L334.0 232.5M436.8 230.0L439.1 228.0L440.3 224.0L438.2 220.0L436.0 218.1L432.5 216.0L430.0 215.1L426.0 215.2L422.2 218.0L421.7 222.0L423.8 226.0L425.6 228.0L428.0 229.7L432.0 231.0L436.0 230.5L436.8 230.0M586.0 256.2L582.0 257.3L578.8 256.0L577.0 252.0L577.7 248.0L580.0 245.0L582.0 243.0L584.0 240.9L586.0 238.3L587.4 234.0L590.0 230.0L593.4 230.0L596.0 231.0L600.0 233.4L602.0 234.9L604.0 236.8L606.0 239.3L607.0 242.0L607.5 246.0L607.0 250.0L604.0 253.3L600.0 252.9L598.0 251.4L594.0 249.5L590.0 252.0L588.5 254.0L586.3 256.0L586.0 256.2M706.2 322.0L702.9 320.0L700.5 318.0L698.1 316.0L694.0 315.9L690.0 317.0L686.0 317.2L682.0 317.1L678.0 316.8L674.0 315.0L670.3 312.0L668.6 310.0L667.0 306.0L667.8 302.0L670.0 300.1L674.0 299.6L678.0 301.6L682.0 303.8L685.8 304.0L689.5 302.0L690.0 298.9L688.5 296.0L686.6 292.0L686.5 288.0L687.1 286.0M508.0 279.0L504.0 279.3L500.0 279.0L496.0 278.2L492.0 277.7L488.0 278.5L484.0 278.7L481.5 278.0L478.2 276.0L476.1 274.0L474.5 272.0L472.1 268.0L470.3 264.0L468.0 260.4L466.0 258.5L462.0 256.0L459.0 254.0L457.0 252.0L455.1 248.0L456.0 244.2L458.0 242.4L462.0 241.8L466.0 243.8L469.4 246.0L472.0 246.9L476.0 246.9L478.4 246.0L480.9 244.0L482.9 242.0L485.8 240.0L490.0 239.6L494.0 241.9L495.7 244.0L497.7 248.0L499.4 252.0L501.2 256.0L502.9 260.0L504.0 262.3L506.0 264.9L508.0 267.0L510.0 269.2L511.4 272.0L511.2 276.0L508.0 279.0M409.4 372.0L411.2 368.0L410.5 364.0L408.2 360.0L407.5 356.0L410.0 352.4L414.0 350.6L418.0 348.4L419.6 346.0L419.8 342.0L418.3 338.0L416.0 334.2L414.7 332.0L412.0 328.4L410.3 326.0L408.6 324.0L406.3 322.0L404.0 320.6L400.0 319.0L397.0 318.0L394.0 317.0L391.6 316.0L388.1 314.0L384.7 312.0L382.0 311.1L378.0 311.1L374.8 312.0L372.0 312.4L368.0 310.8L366.1 308.0L366.0 305.0L366.6 302.0L366.1 298.0L364.5 296.0L362.0 294.6L358.2 292.0L356.5 288.0L357.3 284.0L360.0 280.4L362.0 278.3L364.0 276.1L365.9 274.0L368.0 272.3L372.0 273.9L376.0 275.2L379.0 278.0L379.2 282.0L376.3 286.0L374.4 288.0L372.6 292.0L373.5 296.0L375.4 298.0L378.0 299.9L382.0 301.6L386.0 302.2L390.0 302.4L394.0 303.6L397.4 306.0L400.0 307.8L403.5 310.0L406.0 311.1L409.6 312.0L414.0 311.3L416.3 310.0L418.0 306.9L418.1 304.0L416.0 300.8L414.0 299.3L410.6 298.0L408.0 297.2L404.0 296.9L400.0 296.3L396.0 295.2L393.3 294.0L390.8 292.0L389.2 290.0L388.0 287.6L387.5 284.0L389.0 280.0L390.9 276.0L390.3 272.0L389.1 268.0L390.0 264.9L392.0 262.9L396.0 260.2L397.7 258.0L398.0 255.3L396.0 252.1L392.0 250.1L388.0 248.7L384.0 247.2L380.0 247.3L376.5 250.0L375.3 254.0L376.0 257.0L376.8 260.0L376.0 263.4L374.0 266.0L372.0 267.6L370.0 269.4L368.0 271.6L364.7 270.0L362.0 268.6L358.0 267.1L354.0 267.6L352.0 269.1L350.0 272.0L348.0 276.0L346.0 278.8L344.0 281.6L344.0 285.1L344.8 288.0L345.7 292.0L347.3 296.0L350.0 299.8L352.0 301.8L354.0 303.5L356.0 305.3L358.0 307.6L359.0 310.0L358.4 314.0L356.0 317.6L352.9 316.0L350.6 314.0L348.0 312.1L344.8 310.0L342.0 308.2L340.0 306.5L338.0 304.3L336.1 302.0L334.0 300.3L330.0 299.1L326.0 299.1L322.0 299.0L319.5 298.0L317.9 296.0L317.7 292.0L320.0 288.4L324.0 286.8L326.6 286.0L330.0 285.2L334.0 284.5L338.0 282.6L339.9 280.0L339.2 276.0L338.7 272.0L338.0 268.9L336.0 266.3L332.0 265.2L328.0 264.4L324.0 263.7L320.0 265.9L318.7 270.0L319.0 274.0L319.2 278.0L318.7 282.0L316.0 285.8L312.0 286.8L308.4 286.0L306.0 284.1L304.3 280.0L303.5 276.0M314.0 258.5L316.0 256.9L317.7 254.0M298.0 288.5L300.9 290.0L301.9 294.0L301.2 298.0L301.0 302.0L302.0 304.6L304.0 306.3L308.0 307.0L312.0 307.0L315.9 308.0L319.8 310.0L324.0 311.9L328.0 314.0L330.9 316.0L333.3 318.0L336.0 319.9L339.8 322.0L344.0 323.0L348.0 322.8L352.0 320.8L354.0 318.7L356.6 320.0L359.0 322.0L361.6 324.0L364.0 325.4L368.0 326.7L371.3 324.0L373.6 322.0L376.0 321.0L380.0 321.1L384.0 323.9L385.1 328.0L384.8 332.0L382.8 336.0L380.0 337.7L377.4 336.0L375.1 334.0L372.6 332.0L370.0 330.7L367.1 332.0L365.0 336.0L364.7 340.0L365.9 344.0L367.6 346.0L370.0 347.4L374.0 347.4L376.3 346.0L378.3 344.0L380.8 342.0L384.0 343.0L386.0 345.0L388.0 347.4L389.6 350.0L392.0 354.0L394.0 357.8L395.0 362.0L395.3 366.0L397.5 370.0L400.0 371.6L404.0 373.0L408.0 373.0L409.4 372.0M300.1 326.0L302.5 324.0L303.7 320.0L302.5 316.0L300.1 314.0L296.0 312.9L293.1 312.0L292.0 311.4M288.4 320.0L290.0 323.2L292.0 325.3L296.0 326.9L300.0 326.1L300.1 326.0M494.2 268.0L495.4 264.0L495.0 260.0L494.0 257.4L492.0 254.6L490.0 252.9L486.0 251.2L482.8 252.0L481.1 254.0L480.9 258.0L482.0 261.3L483.5 264.0L485.1 266.0L487.1 268.0L490.0 269.4L494.0 268.2L494.2 268.0M640.0 282.1L636.0 280.0L634.9 276.0L634.2 272.0L633.1 268.0L633.1 264.0L636.0 260.5L640.0 260.5L642.9 262.0L645.2 264.0L647.1 266.0L648.9 270.0L648.6 274.0L646.4 278.0L644.5 280.0L642.0 281.5L640.0 282.1M666.0 376.2L662.0 377.1L658.0 376.9L654.4 376.0L652.0 375.3L648.0 375.0L644.0 375.3L640.0 376.5L636.0 376.6L632.0 374.4L630.5 372.0L629.1 368.0L628.4 364.0L626.7 360.0L624.0 356.8L622.0 355.1L618.0 352.9L614.0 350.6L612.0 349.0L610.0 347.1L608.0 345.4L604.0 344.0L600.0 343.1L596.7 342.0L594.0 340.5L592.0 338.8L590.0 337.0L588.0 335.4L584.9 334.0L582.0 333.5L578.0 333.5L574.0 332.5L572.0 330.0L571.9 326.0L574.0 322.9L576.0 321.2L578.5 320.0L582.0 319.0L586.0 319.3L589.3 322.0L591.0 324.0L593.1 326.0L596.0 327.1L599.6 326.0L601.3 322.0L602.0 319.4L604.0 316.4L608.0 315.4L612.0 316.7L616.0 317.0L618.4 316.0L620.1 314.0L621.0 310.0L621.2 306.0L623.4 302.0L626.0 300.4L630.0 298.2L632.0 296.6L634.0 294.8L638.0 292.6L641.0 292.0L644.0 291.7L648.0 290.8L651.7 288.0L653.3 286.0L655.8 282.0L657.5 278.0L659.1 274.0L661.2 270.0L664.0 268.2L668.0 268.7L672.0 269.2L674.5 270.0L677.3 272.0L679.0 276.0L678.9 280.0L678.0 282.4L676.0 284.6L672.0 285.9L668.0 286.5L665.0 288.0L663.2 290.0L660.9 294.0L658.3 298.0L656.5 300.0L654.0 301.9L650.3 304.0L646.0 304.9L642.0 304.8L638.0 304.6L634.0 305.8L632.3 308.0L631.0 312.0L631.8 316.0L634.0 317.9L638.0 318.2L642.0 318.0L646.0 319.8L647.6 322.0L648.7 326.0L649.0 330.0L649.4 334.0L649.4 338.0L648.4 342.0L646.3 344.0L642.0 344.4L639.1 342.0L637.4 338.0L637.1 334.0L636.5 330.0L634.0 326.4L630.0 324.9L627.0 326.0L624.0 327.8L620.0 329.6L616.0 330.1L612.0 330.4L608.1 332.0L606.9 336.0L608.0 339.4L610.0 340.9L614.0 341.1L618.0 341.0L622.0 341.2L626.0 342.9L630.0 345.5L632.0 347.1L634.0 349.0L636.0 352.0L637.2 356.0L638.0 358.6L640.0 361.6L644.0 363.4L648.0 363.8L652.0 364.3L656.0 364.7L660.0 364.9L663.5 366.0L665.9 368.0L667.8 372.0L666.3 376.0L666.0 376.2M694.7 298.0L694.5 302.0L696.3 304.0L699.2 304.0M534.0 382.6L531.0 382.0L528.2 380.0L526.1 376.0L525.1 372.0L524.7 368.0L522.6 364.0L520.0 362.5L516.0 362.3L512.0 362.8L509.2 362.0L506.6 360.0L504.6 356.0L503.4 352.0L502.9 348.0L502.0 344.7L501.0 342.0L500.0 339.1L499.2 336.0L499.7 332.0L502.0 328.3L506.0 326.2L510.0 325.3L514.0 324.1L516.0 322.0L516.8 318.0L516.1 314.0L515.3 310.0L516.0 306.6L517.2 304.0L519.2 302.0L522.0 301.1L525.0 302.0L527.3 304.0L529.3 308.0L530.4 312.0L530.0 315.7L528.0 319.5L526.0 322.0L524.0 325.2L523.4 328.0L525.6 332.0L528.0 333.1L532.0 332.8L535.7 330.0L537.7 328.0L540.0 326.7L544.0 326.5L547.4 328.0L550.0 329.7L553.6 332.0L556.0 332.9L559.8 334.0L564.0 335.8L566.8 338.0L568.8 340.0L571.1 342.0L574.0 343.4L578.0 344.4L582.0 345.2L584.0 346.8L585.1 350.0L584.0 353.5L582.0 355.8L578.0 357.9L574.0 357.3L571.7 356.0L569.6 354.0L568.0 352.1L566.0 350.2L562.9 348.0L560.0 346.3L557.1 344.0L554.8 342.0L552.0 340.3L548.0 339.5L544.0 341.2L540.0 343.7L536.0 344.8L532.0 344.3L528.0 342.8L524.0 340.5L520.2 338.0L516.0 336.7L512.0 337.3L510.0 339.3L509.2 342.0L510.0 344.4L512.0 347.0L514.0 348.6L516.9 350.0L520.0 351.0L523.6 352.0L526.0 353.0L530.0 355.8L531.8 358.0L534.0 361.6L535.2 364.0L537.5 368.0L539.7 372.0L540.6 376.0L538.6 380.0L536.0 382.0L534.0 382.6M472.0 334.3L468.0 334.9L464.0 334.1L461.3 332.0L459.1 328.0L459.2 324.0L460.8 322.0L464.0 320.5L468.0 320.3L472.0 321.7L474.0 323.5L475.3 326.0L475.9 330.0L474.0 333.0L472.0 334.3M402.0 346.4L398.0 346.9L395.6 346.0L393.8 344.0L392.9 340.0L392.9 336.0L393.3 332.0L396.0 329.1L400.0 328.9L403.7 332.0L405.1 336.0L405.2 340.0L404.3 344.0L402.5 346.0L402.0 346.4M330.0 366.4L326.0 366.9L322.0 364.4L320.8 362.0L321.0 358.0L323.1 354.0L323.9 350.0L322.0 346.6L320.0 345.0L318.0 343.4L316.0 340.3L317.3 336.0L320.0 334.2L323.7 334.0L326.0 335.8L327.7 340.0L330.0 343.1L334.0 344.9L338.0 345.7L341.4 348.0L343.1 352.0L342.4 356.0L340.7 358.0L338.2 360.0L336.0 361.4L334.0 363.1L332.0 364.9L330.0 366.4M536.0 456.4L532.0 456.9L529.1 456.0L526.0 454.1L524.4 452.0L523.1 448.0L523.9 444.0L525.5 442.0L528.0 440.9L532.0 440.8L536.0 440.7L540.0 438.5L541.2 436.0L541.4 432.0L540.1 428.0L538.5 426.0L536.0 424.1L533.0 422.0L530.7 420.0L529.0 418.0L526.6 414.0L524.0 410.6L522.0 408.9L518.0 407.3L514.0 407.1L510.0 407.2L506.0 406.6L503.0 404.0L501.3 400.0L502.0 396.0L503.7 392.0L504.9 388.0L504.0 384.5L502.0 382.1L498.0 381.0L494.0 381.7L490.0 382.9L486.0 382.8L483.6 382.0L480.0 380.8L476.0 380.6L472.0 380.6L469.4 380.0L466.0 378.2L464.4 376.0L463.3 372.0L465.1 368.0L468.0 366.3L472.0 367.2L476.0 369.5L480.0 370.8L482.6 370.0L484.5 368.0L484.9 364.0L484.0 361.1L482.1 358.0L480.4 356.0L478.4 354.0L476.9 350.0L478.0 346.6L478.7 344.0L479.0 340.0L479.4 336.0L482.0 333.1L486.0 332.6L489.1 334.0L490.7 336.0L491.2 340.0L490.9 344.0L490.5 348.0L491.2 352.0L493.4 356.0L495.1 360.0L495.1 364.0L494.7 368.0L496.0 371.8L498.0 373.4L502.0 374.6L506.0 374.5L510.0 374.8L513.0 376.0L515.5 378.0L517.3 380.0L519.2 384.0L519.1 388.0L518.0 391.2L517.1 394.0L517.7 398.0L519.2 400.0L522.0 401.9L526.0 402.0L529.1 400.0L530.7 398.0L532.0 395.6L534.0 393.0L536.0 391.2L540.0 389.0L542.3 388.0L546.0 386.2L549.4 384.0L552.0 382.2L554.0 380.0L555.3 376.0L554.7 372.0L552.2 368.0L550.3 366.0L548.1 364.0L546.0 362.3L544.0 360.4L542.4 358.0L541.4 354.0L544.0 350.3L548.0 349.8L552.0 351.2L555.5 354.0L557.1 356.0L559.3 360.0L561.5 364.0L563.2 366.0L565.9 368.0L570.0 368.9L574.0 368.1L578.0 366.5L582.0 365.1L585.9 364.0L589.4 362.0L591.7 360.0L593.7 358.0L596.0 356.4L600.0 355.1L604.0 355.8L608.0 357.8L610.0 359.4L612.0 361.5L613.9 364.0L616.0 367.1L617.8 370.0L619.7 374.0L620.9 378.0L621.0 382.0L620.0 385.7L618.8 388.0L617.1 390.0L615.0 392.0L612.4 394.0L610.0 396.0L608.4 398.0L606.9 402.0L606.0 405.7L604.3 410.0L602.6 412.0L600.2 414.0L598.0 415.5L594.4 418.0L592.0 419.2L588.1 420.0L584.0 419.3L580.0 418.6L576.0 418.4L573.1 420.0L571.2 424.0L572.0 426.7L574.0 428.7L576.4 430.0L580.0 431.2L584.0 433.7L585.5 436.0L586.4 440.0L584.5 444.0L582.2 446.0L578.0 447.1L574.0 446.5L572.0 444.9L570.0 442.2L568.2 438.0L566.2 434.0L564.4 430.0L562.9 426.0L562.0 423.1L560.8 420.0L558.6 416.0L556.0 412.1L555.0 408.0L556.0 405.2L558.0 403.5L562.0 403.6L564.9 406.0L566.5 408.0L568.4 410.0L572.0 411.7L576.0 410.0L576.6 406.0L574.0 402.6L572.0 401.0L570.0 399.3L568.0 396.8L567.6 394.0L570.0 391.3L574.0 390.5L578.0 391.0L582.0 393.5L583.4 396.0L584.7 400.0L585.7 404.0L588.0 406.0L591.9 406.0L594.6 404.0L596.0 401.6L596.8 398.0L596.4 394.0L595.8 390.0L597.6 386.0L600.0 384.2L603.9 382.0L606.0 380.1L607.1 376.0L606.0 372.0L604.0 370.1L600.0 368.9L596.0 369.2L592.0 371.8L590.5 374.0L588.0 377.9L586.0 379.9L582.0 380.8L579.2 380.0L576.0 378.8L572.0 378.3L568.0 379.4L566.0 381.1L564.0 383.4L562.4 386.0L560.0 389.2L558.0 391.2L556.0 393.0L552.0 395.3L548.0 397.2L544.0 399.6L542.0 401.5L540.6 404.0L540.1 408.0L541.9 412.0L543.4 414.0L545.1 416.0L546.7 418.0L549.0 422.0L550.9 426.0L552.0 428.8L553.0 432.0L554.0 434.6L556.0 438.0L557.5 440.0L559.2 442.0L561.0 446.0L560.0 449.1L558.0 450.7L554.0 450.3L550.0 448.1L546.0 447.5L542.3 450.0L540.7 452.0L539.0 454.0L536.6 456.0L536.0 456.4M303.5 390.0L304.7 386.0L305.0 382.0L305.0 378.0L304.1 374.0L302.0 370.1L300.5 368.0L298.6 366.0L296.0 364.2L292.0 362.8L288.2 362.0L284.0 362.6M383.3 432.0L384.0 428.0L382.6 424.0L380.8 422.0L378.0 420.1L374.5 418.0L372.0 416.4L370.0 414.8L368.0 413.0L366.0 411.1L364.0 408.9L362.0 406.0L360.0 402.9L358.0 400.8L356.0 398.9L354.0 397.0L352.0 394.4L350.9 392.0L349.1 388.0L347.6 386.0L344.0 384.7L340.0 385.7L338.0 387.4L336.0 389.5L334.0 391.4L330.0 393.4L326.0 394.2L322.0 393.7L318.0 393.6L314.0 395.0L312.0 396.5L310.0 398.8M442.0 416.7L438.0 417.1L435.4 416.0L433.6 414.0L432.0 411.1L430.4 408.0L428.8 406.0L426.7 404.0L424.0 402.4L420.0 401.0L416.0 400.7L412.0 401.0L408.9 402.0L406.0 403.2L402.0 404.8L398.0 405.2L394.0 404.9L391.6 404.0L389.3 402.0L388.0 399.8L387.3 396.0L389.7 394.0L394.0 393.0L398.0 392.9L402.0 392.8L404.7 392.0L408.0 390.8L412.0 389.3L416.0 389.1L419.7 390.0L422.0 391.1L426.0 393.2L430.0 394.8L434.0 395.9L438.0 397.4L441.9 400.0L443.7 402.0L445.3 406.0L445.6 410.0L444.7 414.0L443.0 416.0L442.0 416.7M730.0 405.5L726.1 404.0L722.7 402.0L720.0 401.3L716.0 401.5L712.0 401.0L709.6 400.0L706.0 398.2L702.0 397.0L698.0 397.1L694.8 398.0L692.0 399.3L690.0 400.9L688.0 402.9L686.0 405.4L684.0 408.0L682.0 410.0L680.0 411.5L678.0 413.2L676.7 416.0L678.0 418.8L680.0 421.2L682.0 422.9L686.0 425.2L690.0 427.1L694.0 428.8L698.0 429.5L700.8 430.0L704.0 430.6L708.0 431.1L710.6 432.0L714.0 433.9L715.7 436.0L716.0 439.3L714.6 442.0L712.5 444.0L710.0 445.7L706.0 447.5L702.0 447.9L698.0 448.3L694.5 450.0L692.6 452.0L690.1 456.0L688.1 460.0L686.0 463.2L684.0 466.0L682.0 469.7L681.0 474.0L681.0 478.0L682.0 482.0L684.0 484.5L687.1 486.0L690.0 486.2L694.0 485.0L698.0 484.6M692.0 498.1L688.0 496.3L684.0 495.6L680.0 495.5L676.0 494.8L672.2 492.0L670.3 488.0L669.2 484.0L670.0 480.1L671.8 476.0L673.1 472.0L674.0 468.6L674.5 466.0L674.0 462.5L672.8 460.0L670.2 458.0L666.0 458.9L664.0 460.6L662.0 463.5L661.1 466.0L660.9 470.0L662.0 472.7L664.0 475.7L665.2 478.0L665.4 482.0L663.7 484.0L660.0 486.0L656.9 486.0L654.0 484.0L653.0 480.0L653.4 476.0L653.9 472.0L652.0 468.8L650.1 466.0L651.6 462.0L654.0 458.5L655.7 456.0L658.0 452.5L658.8 450.0L658.4 446.0L657.6 442.0L660.0 438.5L664.0 437.7L667.4 440.0L669.5 444.0L671.0 448.0L674.0 451.7L678.0 451.5L681.0 450.0L684.0 448.0L687.9 446.0L691.3 444.0L692.9 442.0L693.0 438.0L691.4 436.0L688.0 435.0L684.0 435.0L680.0 435.0L676.0 434.2L672.2 432.0L668.6 430.0L666.0 429.1L662.0 428.7L658.0 428.7L654.0 428.7L650.5 428.0L648.0 427.0L646.1 424.0L646.4 420.0L647.5 416.0L650.0 413.0L652.0 411.3L653.1 408.0L652.0 405.7L650.2 402.0L648.1 400.0L644.0 399.2L641.3 400.0L638.0 401.4L634.0 403.1L630.5 406.0L630.6 410.0L632.0 412.7L634.0 415.7L635.1 418.0L636.9 422.0L640.0 426.0L642.0 427.7L643.6 430.0L644.7 434.0L645.8 438.0L647.3 442.0L647.7 446.0L646.3 450.0L644.0 453.3L642.8 456.0L642.9 460.0L644.0 462.3L646.0 464.7L647.3 468.0L644.1 472.0L640.0 473.3L636.0 472.1L634.0 470.5L632.0 468.3L630.1 466.0L628.2 464.0L626.0 462.2L622.0 460.0L618.0 459.5L614.1 462.0L612.8 466.0L613.3 470.0L616.0 473.2L620.0 475.2L624.0 476.8L626.6 478.0L630.0 479.5L634.0 480.9L638.0 481.9L641.0 484.0L642.7 488.0L640.9 492.0L639.1 494.0L637.3 496.0L635.5 500.0L636.0 502.5L637.5 506.0L640.0 509.4L642.0 511.5L645.8 510.0L647.4 508.0L648.9 504.0L649.1 500.0L650.0 497.1L652.0 494.9L656.0 494.3L658.9 496.0L660.9 498.0L662.9 500.0L665.3 502.0L668.0 503.3L672.0 505.1L676.0 508.0L677.4 512.0L677.7 516.0L678.4 520.0L679.7 524.0L680.8 526.0M669.0 536.0L668.9 532.0L669.0 528.0L668.5 524.0L666.1 520.0L664.0 518.4L660.0 517.4L656.0 518.6L652.0 519.2L648.0 518.3L644.9 516.0L642.0 514.5L639.4 516.0L636.0 517.6L632.0 518.2L628.0 516.3L626.0 514.5L624.0 512.6L620.0 510.4L616.0 510.3L612.5 512.0L611.0 514.0L610.7 518.0L612.0 520.8L614.0 523.0L616.0 524.9L618.0 526.9L620.0 529.5L621.2 532.0L622.6 536.0L623.0 540.0L623.1 544.0M322.0 405.3L326.0 404.2L330.0 403.4L334.0 402.4L338.0 401.2L342.0 401.4L346.0 403.4L348.0 405.1L350.0 407.2L350.7 408.0M720.0 464.7L716.0 465.0L712.0 465.3L708.0 467.1L706.0 469.0L704.0 471.9L702.6 474.0L700.6 476.0L698.0 477.0L695.0 476.0L693.1 474.0L692.0 471.6L691.8 468.0L694.0 464.8L698.0 462.3L701.7 460.0L704.0 458.3L706.0 456.7L710.0 454.9L714.0 454.7L716.9 454.0L720.0 452.9L724.0 451.0L726.6 450.0L730.0 448.6L732.0 446.8L732.6 446.0M732.6 442.0L730.0 438.9L728.0 437.2L726.0 435.3L724.2 432.0L723.0 428.0L722.0 425.5L720.0 423.3L716.0 421.1L712.0 420.1L708.0 419.6L704.0 419.8L700.4 420.0L696.0 419.2L693.7 418.0L692.0 414.9L692.6 412.0L694.6 410.0L698.0 409.0L702.0 409.1L706.0 409.8L710.0 410.7L714.0 410.9L718.0 411.3L722.0 412.7L726.0 413.6L730.0 414.9M635.0 452.0L636.9 448.0L636.8 444.0L634.6 440.0L632.4 438.0L630.1 436.0L628.0 432.1L627.5 428.0L626.8 424.0L625.1 422.0L622.0 421.3L618.5 424.0L616.6 428.0L614.1 432.0L612.2 434.0L610.2 436.0L608.0 440.0L608.7 444.0L611.7 446.0L616.0 445.5L620.0 445.3L623.5 448.0L625.0 450.0L626.7 452.0L630.0 453.7L634.0 452.8L635.0 452.0M556.0 466.3L552.9 466.0L550.3 464.0L550.0 461.1L551.9 458.0L556.0 457.0L559.5 460.0L559.1 464.0L556.5 466.0L556.0 466.3M546.0 484.1L542.0 485.0L538.0 484.9L534.0 484.2L530.0 482.5L528.0 480.7L526.9 478.0L527.5 474.0L530.0 470.2L532.0 468.1L534.0 466.5L538.0 465.0L542.0 465.9L544.0 467.7L545.3 470.0L547.2 474.0L549.2 478.0L548.8 482.0L546.2 484.0L546.0 484.1M496.8 486.0L496.9 482.0L498.0 478.3L500.0 476.3L504.0 475.0L508.0 475.3L510.6 476.0L514.0 476.9L516.9 478.0L519.1 480.0L519.7 484.0L518.0 487.1L516.0 488.9L512.0 491.3L508.4 494.0L506.7 496.0L506.0 497.0M598.0 514.0L601.3 512.0L603.0 510.0L604.7 506.0L605.9 502.0L608.0 499.5L611.3 498.0L614.0 498.0L618.0 499.1L621.2 500.0L624.0 500.3L628.0 498.6L629.6 496.0L628.8 492.0L627.2 490.0L624.8 488.0L622.0 486.6L618.0 485.1L614.0 484.7L610.0 484.9L606.0 485.7L602.0 487.9L600.0 489.7L598.5 492.0L596.7 496.0L594.8 500.0L592.7 504.0L591.3 508.0L592.0 511.3L594.0 513.5L598.0 514.0L598.0 514.0M522.0 532.9L524.7 532.0L528.0 530.4L531.1 528.0L533.1 526.0L535.1 524.0L537.3 522.0L540.0 520.2L544.0 518.8L548.0 519.0L552.0 521.8L554.0 523.6L558.0 525.4L562.0 527.0L566.0 529.3L568.0 530.8L572.0 533.4L576.0 535.5L580.0 536.8L584.0 536.1L588.0 534.5L592.0 533.5L596.0 536.0L596.8 540.0L596.0 542.7M607.3 542.0L608.7 538.0L608.8 534.0L606.3 530.0L604.0 528.0L602.0 526.3L600.0 524.4L598.0 522.6L594.0 520.7L590.0 521.2L586.0 523.0L583.1 524.0L580.0 524.2L576.0 522.7L572.0 520.0L570.2 518.0L568.8 514.0L568.3 510.0L566.4 506.0L564.0 504.8L560.0 505.4L556.6 508.0L554.0 510.0L550.0 511.2L546.0 510.6L542.0 508.5L538.0 507.1L534.0 507.8L532.0 509.4L530.1 512.0L528.0 515.2L526.0 517.2L522.0 519.6L518.0 521.1M635.2 544.0L634.0 541.3L632.3 538.0L630.2 534.0L630.0 530.0L632.0 527.5L636.0 527.0L638.5 528.0L640.7 530.0L643.6 534.0L646.0 535.9L649.0 536.0L652.0 534.6L656.0 533.0L659.6 534.0L661.3 536.0L662.0 540.0L662.0 540.1M550.0 559.4L546.0 559.9L543.4 562.0L540.7 566.0L538.9 568.0L536.0 569.5M530.0 558.2L532.0 556.4L535.2 554.0L537.7 552.0L539.8 550.0L541.8 548.0L544.0 546.4L548.0 545.3L552.0 547.2L554.0 548.9L556.0 550.6M574.0 545.1L570.0 544.9L566.9 544.0L564.0 542.9L560.0 540.8L556.2 538.0L554.6 536.0L552.0 532.2L550.0 530.7L546.0 530.7L543.3 532.0L541.1 534.0L539.1 536.0L537.0 538.0L534.6 540.0L532.0 541.5L528.0 543.7L526.0 545.0" fill="none" stroke="#000" stroke-width="1.55" stroke-linejoin="round"/><path d="M254.8 337.2L275.7 342.2M253.6 334.1L277.5 341.8M255.1 331.5L276.2 340.7M257.6 329.5L277.8 340.3M256.6 327.8L278.2 340.0M259.1 326.2L277.6 338.5M260.6 324.4L277.5 336.9M261.0 323.4L279.5 337.2M262.0 321.5L278.3 334.7M263.3 319.9L279.2 333.2M261.6 317.8L280.9 333.3M264.2 317.2L281.3 331.3M264.5 316.4L281.3 330.1M266.3 315.4L282.1 328.1M264.8 312.8L283.3 326.3M266.0 312.7L284.5 325.7M266.6 311.4L286.0 323.8M267.4 310.9L285.7 322.4M267.6 309.5L288.3 321.1M268.2 308.1L288.4 318.8M268.2 307.2L288.4 317.6M267.9 305.5L289.4 315.7M269.2 305.1L288.9 314.4M268.7 303.2L291.4 313.0M268.7 301.5L290.1 310.4M271.0 301.2L290.2 309.4M271.0 299.4L292.9 308.1M271.4 298.5L291.0 306.6M270.9 296.5L291.8 304.8M272.2 294.9L293.8 303.4M270.3 293.4L292.5 302.1M272.8 292.1L294.6 300.8M273.5 291.2L294.1 299.8M273.0 289.0L293.8 297.9M273.5 287.0L293.9 296.2M274.4 286.2L296.5 296.1M274.8 284.2L296.8 294.5M274.2 282.9L297.1 293.7M276.7 281.6L296.5 291.8M275.7 279.1L297.5 290.4M276.7 278.4L298.0 289.7M276.1 275.9L297.9 287.9M279.2 275.0L297.3 285.9M279.8 274.2L299.7 286.0M280.4 272.2L299.3 284.0M279.3 270.7L299.2 283.1M279.5 268.5L300.4 281.8M281.3 267.1L300.6 280.0M283.1 266.9L300.5 279.0M284.2 265.2L300.8 277.2M284.1 263.0L302.4 276.1M285.7 262.7L304.2 276.1M284.6 259.8L304.8 274.5M286.3 259.7L304.5 273.3M287.7 258.2L304.6 271.4M288.9 256.7L307.2 270.9M288.8 255.4L306.0 269.2M288.3 252.8L308.5 268.7M289.8 251.5L307.6 266.1M291.1 251.1L309.8 266.4M293.2 250.1L311.1 265.1M291.5 247.9L311.1 264.1M292.7 246.3L311.2 262.1M295.0 245.5L313.0 261.1M296.0 245.0L311.6 259.1M297.2 243.5L313.0 257.8M296.0 241.4L314.3 257.6M297.9 240.4L314.1 255.3M299.8 239.4L315.2 253.8M299.0 237.7L317.1 254.1M300.3 236.2L317.6 252.2M301.4 235.8L318.8 251.9M303.3 234.9L319.7 250.3M304.1 233.0L319.5 247.9M303.2 231.2L320.9 247.8M304.3 229.7L322.3 246.5M305.5 229.3L323.1 245.9M305.9 227.3L323.7 244.1M307.1 225.7L325.1 242.9M309.4 226.2L326.0 242.5M310.3 224.4L325.3 239.7M309.6 222.6L327.3 240.2M312.6 222.4L327.1 237.8M313.1 220.1L328.9 237.1M313.1 218.8L328.4 235.7M315.1 217.7L331.0 235.8M316.1 215.8L330.8 233.5M318.1 216.2L333.0 234.5M318.9 214.0L333.6 233.0M320.3 213.9L334.4 232.8M321.7 212.2L334.8 231.2M323.6 211.0L335.1 229.3M323.4 209.1L336.8 230.2M325.2 207.7L337.8 229.3M327.5 207.1L337.8 226.9M329.1 207.4L338.7 227.0M331.0 206.4L340.5 227.2M331.5 203.1L341.5 226.1M332.8 203.1L341.2 224.0M335.6 203.8L343.0 224.1M337.6 203.1L345.0 224.7M338.1 201.6L345.8 224.6M340.2 201.2L347.3 224.1M341.6 199.0L348.6 223.2M343.0 199.8L348.9 222.0M344.9 198.9L350.9 222.4M345.6 197.7L351.0 220.4M348.0 198.3L352.5 219.6M349.6 196.5L354.7 220.8M350.4 195.7L355.6 220.7M352.5 195.4L356.3 217.4M354.0 196.8L357.9 219.6M355.9 196.1L359.1 217.5M356.7 195.3L359.9 216.7M358.2 193.4L361.8 217.0M360.4 193.8L363.4 215.9M361.4 193.8L364.4 216.0M363.1 192.3L366.6 217.2M364.4 193.3L367.0 215.1M365.9 191.6L369.1 215.5M367.2 192.8L369.7 214.1M368.6 190.4L371.7 214.1M371.0 191.9L373.6 213.9M371.6 190.5L374.8 214.7M373.3 189.7L376.1 212.3M374.4 190.0L377.2 212.7M376.1 189.2L379.4 213.2M377.1 189.6L380.5 213.6M378.8 188.6L381.8 211.1M380.3 187.2L384.1 212.5M381.6 188.5L384.9 211.8M383.2 187.1L386.8 211.7M383.9 186.2L387.2 209.4M385.9 186.7L389.1 209.3M387.9 186.7L391.1 209.8M388.7 186.2L392.1 209.9M390.6 186.2L394.0 209.6M392.5 186.1L395.8 209.1M392.9 184.2L396.6 208.7M394.6 183.5L398.5 208.7M395.7 183.7L399.3 207.9M397.3 182.6L401.0 207.5M399.2 182.6L402.9 207.4M400.2 182.7L403.7 206.8M402.2 183.3L405.2 205.3M404.0 182.7L406.9 204.7M404.5 181.0L408.2 206.1M406.4 180.7L409.6 204.2M408.2 180.2L411.0 202.5M409.0 179.9L412.5 204.8M411.0 179.8L414.0 203.4M411.9 179.6L415.1 204.1M413.5 178.3L416.8 203.3M415.4 178.1L418.3 202.0M416.6 179.0L419.3 202.0M418.7 179.6L421.0 201.5M420.2 178.0L422.7 201.1M421.3 178.6L423.8 201.6M423.2 178.2L425.2 199.8M423.9 177.2L426.2 200.3M426.0 177.5L428.0 199.7M427.9 177.5L429.9 200.3M428.3 174.6L430.6 199.1M430.3 175.1L432.3 198.7M431.2 174.5L433.1 198.0M433.4 175.9L434.7 196.8M435.1 174.3L436.4 196.3M436.0 174.1L437.5 197.2M437.9 173.6L439.6 198.5M439.6 172.2L440.9 195.6M440.9 174.2L441.9 196.2M442.5 172.0L443.8 196.3M443.5 172.2L444.6 196.1M445.6 172.4L446.4 195.6M447.6 172.8L448.0 194.7M448.5 172.3L449.1 195.6M450.5 172.7L450.8 194.8M451.3 171.1L451.7 194.8M453.1 170.4L453.6 195.6M455.1 170.2L455.1 193.7M456.1 170.5L456.2 195.6M458.3 172.0L457.7 193.0M459.3 172.2L458.6 192.8M461.0 170.4L460.5 194.0M462.9 170.0L462.1 192.7M463.9 169.3L463.0 192.4M466.0 171.1L464.8 192.7M467.9 169.9L466.5 191.9M468.8 169.7L467.5 194.0M470.8 170.6L469.3 194.3M471.8 170.1L470.1 193.4M473.8 171.2L471.9 193.9M475.7 170.6L473.6 193.9M476.7 168.9L474.5 193.6M478.6 168.9L476.2 194.0M480.6 170.6L477.9 191.4M481.6 170.8L478.8 192.7M483.6 169.0L480.5 193.7M484.6 168.2L481.3 192.7M486.6 168.5L483.0 193.7M488.5 170.1L484.8 192.2M489.5 170.3L485.6 193.1M491.4 170.5L487.3 193.4M493.4 170.1L489.0 193.2M494.5 169.1L489.9 192.8M496.3 171.3L491.5 194.4M497.4 169.9L492.4 193.9M499.5 169.3L494.1 193.8M501.3 171.2L495.7 194.4M502.5 169.7L496.5 194.8M504.1 172.3L498.4 193.1M506.3 171.3L499.8 195.2M507.3 171.2L500.7 195.2M509.3 171.5L502.6 193.6M510.3 171.4L503.2 195.0M512.0 173.4L505.1 194.3M513.9 174.1L506.5 195.8M515.4 171.8L507.6 194.3M517.3 172.2L509.1 195.7M519.2 172.8L510.8 196.0M519.7 175.4L511.8 195.4M521.9 174.6L513.4 196.4M522.8 174.9L514.4 195.7M524.6 175.8L516.2 196.1M526.8 174.9L517.7 197.0M527.2 177.2L518.3 198.3M529.7 175.5L520.1 198.4M531.1 177.7L522.0 198.2M532.2 177.3L523.2 197.4M534.1 177.4L524.9 198.2M534.9 178.4L525.8 198.2M536.3 180.1L526.9 200.9M538.5 179.3L529.3 199.4M539.1 180.8L529.6 201.7M541.6 179.0L531.7 201.1M542.3 180.0L532.6 201.4M544.2 180.3L534.6 201.3M545.4 182.7L535.8 203.7M546.9 180.7L537.4 201.9M548.7 181.2L538.5 204.6M549.1 183.1L539.4 205.1M550.7 184.3L541.5 204.9M552.4 184.7L543.6 204.6M553.7 183.5L544.3 205.5M555.7 183.3L546.0 206.8M556.1 185.1L547.1 206.4M557.8 185.6L549.1 206.5M559.8 184.9L550.8 207.7M560.7 185.2L552.2 206.3M562.1 187.1L554.0 206.9M562.8 187.8L555.0 206.9M565.1 186.2L556.6 208.7M567.0 186.2L558.6 208.4M567.5 187.7L559.1 210.5M569.4 188.0L561.1 210.4M570.3 188.2L562.2 209.6M571.8 189.7L563.8 211.1M574.0 188.4L566.0 210.1M574.5 190.6L566.6 211.3M576.8 189.1L568.7 210.7M577.8 189.0L569.7 210.4M579.1 191.6L571.5 210.7M581.1 191.2L573.3 211.1M582.2 191.0L574.2 211.2M584.3 190.5L575.7 212.8M585.1 191.2L576.2 214.4M586.8 192.2L578.2 213.9M589.0 191.6L580.0 213.6M589.8 192.4L581.0 213.4M591.9 192.0L582.7 214.1M593.8 192.5L584.0 215.5M594.7 192.8L584.6 216.7M596.1 195.1L586.6 216.0M598.0 195.7L588.6 215.4M598.7 196.6L589.3 215.7M600.5 197.5L590.6 217.1M601.9 196.5L591.2 218.0M603.9 196.8L592.8 218.5M605.8 197.7L594.4 219.0M606.2 199.4L595.3 218.8M607.9 200.4L596.8 219.6M610.4 199.6L598.9 218.8M611.3 200.0L599.7 219.2M612.8 201.3L600.5 221.6M614.4 202.6L602.0 222.2M615.5 202.6L603.7 220.7M617.7 202.4L604.9 222.2M617.9 204.4L605.7 222.5M620.2 204.0L607.4 222.8M621.0 206.7L608.1 225.4M622.2 206.6L608.7 226.1M624.4 206.5L610.5 226.4M625.7 208.1L611.7 227.8M627.0 207.7L613.7 226.1M628.5 208.9L614.8 227.8M630.1 210.0L616.6 228.2M630.8 210.7L617.0 229.3M631.8 212.8L618.1 231.1M633.2 212.3L618.8 231.7M635.2 212.5L620.9 231.6M636.6 213.8L622.7 232.3M637.9 213.6L623.4 232.9M639.2 215.1L624.8 234.3M640.1 215.4L626.5 233.1M641.8 216.2L627.5 235.0M643.6 216.9L629.1 236.0M643.3 219.4L629.4 237.2M645.9 218.8L630.8 238.5M646.8 219.1L632.4 237.6M648.3 220.4L634.1 238.4M650.5 220.5L634.7 240.9M650.3 222.6L636.5 239.7M653.0 222.0L637.8 241.1M652.7 224.3L638.0 242.6M655.5 223.4L640.8 241.5M655.9 226.5L641.1 244.4M657.8 225.3L642.3 244.2M659.2 226.8L643.5 245.6M659.2 228.5L645.3 244.5M660.6 230.1L645.5 247.6M662.9 230.0L647.5 247.8M663.1 231.5L649.0 247.2M665.4 231.6L649.6 249.6M665.5 233.2L650.3 250.0M667.9 233.1L652.7 249.8M669.0 233.4L652.3 251.9M669.8 235.7L654.1 252.4M672.6 235.1L655.4 253.6M673.0 236.2L656.5 253.6M674.6 237.4L657.6 255.2M675.3 238.1L659.1 254.6M675.7 240.9L659.8 256.6M678.3 240.7L661.7 257.0M678.7 241.8L662.0 258.0M680.2 243.2L663.0 259.5M682.6 243.3L665.4 259.3M682.8 244.6L666.0 259.9M683.5 246.9L667.4 261.0M685.6 246.0L667.5 262.2M687.0 247.5L667.9 264.3M687.9 249.4L670.9 263.5M689.6 249.0L670.6 265.2M691.1 250.4L672.3 265.8M690.6 253.8L672.9 267.7M691.7 254.1L673.2 268.5M693.4 255.2L675.0 269.1M695.4 254.7L674.8 270.5M696.7 256.2L677.4 270.3M696.4 259.2L678.5 271.5M697.7 259.4L677.7 273.4M699.2 260.7L678.6 274.7M699.1 263.4L681.2 274.7M700.9 263.3L681.8 275.3M703.3 263.9L681.2 277.8M702.8 266.9L684.5 277.4M703.9 267.3L684.7 278.3M705.3 268.8L684.5 280.5M704.7 270.5L686.5 280.1M706.0 272.0L685.8 282.6M707.6 273.2L688.6 282.7M709.0 273.5L688.5 283.8M709.6 275.5L688.1 286.0M711.9 276.4L689.2 287.3M710.1 278.7L691.0 287.2M711.2 280.4L692.1 288.5M713.1 281.5L691.3 290.9M714.6 281.8L691.5 291.8M714.5 284.1L694.1 292.3M716.0 284.4L694.6 293.0M715.9 286.7L694.7 294.9M716.1 288.8L694.6 296.9M716.6 289.7L695.6 297.4M719.3 290.5L696.4 298.9M718.8 293.0L696.8 300.6M720.0 293.5L697.5 301.2M719.7 295.8L698.1 302.9M721.7 295.9L698.7 303.6M721.6 298.2L700.8 304.5M723.5 299.5L701.5 306.2M722.8 300.9L701.1 307.3M724.7 302.2L702.5 308.6M725.2 303.0L702.6 309.6M725.6 305.0L702.2 311.7M725.2 307.3L704.1 312.8M727.1 307.6L702.6 314.4M728.1 309.2L703.8 315.9M727.2 310.7L703.6 316.9M727.7 312.5L705.1 318.2M729.2 314.1L705.7 320.0M728.4 315.4L707.1 320.4M728.9 317.3L707.7 322.1M728.8 318.3L706.1 323.7M731.6 319.4L708.4 324.7M730.8 321.7L710.1 326.1M731.0 322.7L709.7 327.2M733.1 324.0L710.7 328.8M733.9 324.7L709.3 330.3M732.2 327.3L709.3 332.2M735.1 328.3L710.7 333.7M733.5 329.9L712.3 334.1M735.7 331.2L713.5 335.6M736.5 331.9L713.1 336.7M735.7 334.2L712.9 338.7M736.5 335.9L712.9 340.7M737.3 336.7L714.7 341.0M737.1 338.7L714.6 343.0M736.8 339.8L714.7 344.0M738.6 341.2L714.0 346.1M738.5 343.2L716.1 347.3M739.8 343.8L715.7 348.4M738.2 346.3L717.1 349.9M740.5 346.6L715.8 351.3M741.4 348.3L717.5 352.6M739.9 350.8L718.0 354.3M741.5 351.2L717.7 355.4M741.2 353.3L718.1 357.2M742.0 355.1L719.7 358.6M742.2 356.0L718.7 359.8M741.9 358.1L720.8 361.1M744.2 358.4L720.9 362.0M743.2 360.6L720.7 363.9M745.8 361.9L720.9 365.7M744.8 363.1L720.4 366.8M743.8 365.4L721.2 368.4M745.1 367.0L721.5 370.2M744.6 368.1L721.7 371.1M745.2 369.9L724.0 372.3M745.6 370.8L722.7 373.6M745.9 372.7L723.4 375.2M746.1 374.6L723.4 377.1M746.3 375.5L723.4 378.0M748.0 377.0L725.0 379.5M749.5 378.6L726.2 381.0M748.2 379.9L726.4 381.9M750.1 381.4L726.6 383.6M749.2 382.6L726.6 384.6M750.0 384.4L727.4 386.2M750.8 386.1L728.5 387.8M751.4 387.0L727.0 389.0M751.2 389.0L728.3 390.6M752.2 390.7L728.0 392.4M750.1 392.1L727.2 393.5M750.3 394.0L727.5 395.2M752.9 395.5L730.2 396.5M751.4 396.7L729.3 397.6M752.8 398.4L728.9 399.5M753.1 399.3L730.4 400.1M751.6 401.5L728.3 402.2M753.4 403.2L728.9 403.9M752.7 404.3L729.4 404.7M753.9 406.0L731.2 406.3M753.8 408.0L731.1 408.1M754.8 408.8L730.8 409.0M753.1 411.0L731.3 410.7M754.9 411.7L731.9 411.6M753.9 413.8L731.1 413.4M755.0 415.6L731.1 415.2M754.2 416.7L731.1 416.1M755.0 418.6L731.9 417.8M755.2 419.5L733.4 418.6M755.1 421.5L732.0 420.5M756.5 423.3L732.4 422.2M755.8 424.4L731.6 423.2M754.4 426.4L733.8 424.8M754.4 428.4L733.5 426.6M754.9 429.3L732.7 427.6M755.7 431.2L734.2 429.3M755.2 432.2L733.9 430.2M756.8 434.1L734.3 432.0M757.4 435.1L732.4 433.0M756.8 437.2L733.0 434.7M756.5 439.3L733.3 436.4M756.9 440.3L732.9 437.2M755.3 442.4L732.3 438.8M757.4 443.6L733.9 439.6M756.5 445.8L734.1 441.2M756.4 448.1L733.5 442.6M754.5 449.0L732.9 443.3M753.8 451.2L732.6 444.6M753.9 453.6L731.9 445.8M753.8 454.8L734.0 446.9M752.7 457.0L733.5 448.1M754.4 458.8L732.6 448.5M752.1 460.6L731.4 449.4M751.4 462.9L731.4 450.7M750.1 463.7L730.1 450.8M750.1 466.4L731.7 453.1M747.9 467.9L728.9 453.0M746.7 468.5L729.9 454.4M747.0 471.5L730.2 456.3M746.5 472.7L728.2 455.7M744.5 474.2L726.9 456.4M743.5 476.4L727.6 458.9M742.5 477.2L726.8 459.1M740.2 478.3L725.5 460.0M740.1 479.9L725.7 461.3M737.7 480.8L723.6 461.3M736.2 480.9L723.3 462.1M735.4 483.5L722.9 463.9M733.5 483.1L722.5 464.7M732.3 485.2L720.9 465.3M730.4 486.4L719.0 465.5M728.9 486.2L718.2 465.9M728.1 488.7L716.7 466.8M726.5 488.0L717.1 469.1M724.5 488.5L715.5 470.1M724.4 490.1L714.2 470.0M723.2 491.4L711.8 470.2M722.4 491.6L712.1 472.4M721.3 492.7L710.2 473.5M720.8 494.4L708.1 474.4M719.1 493.4L706.7 474.6M719.6 495.7L704.7 476.0M718.3 495.8L702.7 477.6M718.9 496.9L703.0 479.6M716.4 496.1L701.5 481.7M717.0 497.4L699.7 483.7M718.1 498.9L698.8 486.2M715.5 498.2L696.7 486.7M716.4 499.8L694.6 488.6M715.2 500.7L693.9 491.0M715.7 501.6L693.9 492.2M715.1 502.9L694.8 494.8M715.0 503.7L693.7 495.7M714.7 505.4L692.5 497.6M714.8 507.3L693.2 499.8M713.4 507.9L691.7 500.5M714.9 510.3L693.0 502.7M714.5 511.2L693.5 503.7M713.8 513.3L690.9 504.9M712.3 514.0L692.1 506.0M713.8 516.8L692.4 507.7M711.3 518.4L689.9 508.5M710.4 519.3L691.3 509.7M712.1 522.4L689.6 510.5M709.4 522.6L691.5 512.1M710.0 525.3L689.6 512.8M708.3 527.0L689.9 514.5M707.2 527.7L688.9 514.9M705.7 529.4L687.2 515.5M706.0 532.2L688.0 517.6M706.1 533.5L687.1 518.0M702.6 533.9L686.5 519.3M703.1 535.6L685.9 519.8M701.6 537.2L685.7 521.5M699.3 538.1L684.0 522.1M699.2 539.5L684.6 523.6M697.3 540.7L682.7 524.0M697.3 543.6L682.8 526.2M695.1 543.1L682.0 526.6M693.4 544.4L680.9 527.8M694.2 546.9L680.4 528.5M692.6 548.4L679.1 529.5M690.3 547.6L678.1 529.6M690.0 550.5L676.6 530.3M686.7 550.1L674.7 530.6M687.3 552.6L675.1 532.4M685.7 554.2L673.9 533.5M684.6 554.6L672.8 533.3M683.1 556.4L672.2 535.3M681.0 555.3L671.4 535.5M679.4 556.9L670.3 536.8M678.1 557.0L668.3 535.1M675.8 557.5L667.3 536.4M674.5 559.7L666.4 537.9M673.0 559.2L665.6 538.1M671.4 561.0L664.1 538.3M670.4 561.6L663.5 538.7M667.9 561.3L662.1 539.1M666.0 562.5L661.2 540.9M664.8 562.4L659.9 539.3M662.8 563.1L659.2 541.8M661.0 564.6L657.7 542.0M659.6 563.6L657.3 543.4M658.2 566.8L655.5 542.5M655.9 566.3L654.1 543.2M654.7 566.0L653.2 542.4M652.6 566.4L651.7 542.8M651.8 567.4L650.9 542.9M649.4 565.6L649.4 543.1M647.4 566.5L647.9 543.6M646.5 568.0L647.2 544.4M644.4 567.8L645.6 544.3M642.3 566.8L643.8 542.8M641.4 568.9L643.2 545.5M639.3 567.0L641.4 543.6M637.3 568.4L639.8 543.4M636.3 566.5L638.9 543.8M634.3 568.6L637.3 545.2M633.3 566.1L636.4 543.6M631.3 566.6L634.7 544.0M629.4 565.9L632.9 545.5M628.4 566.9L632.0 545.7M626.4 567.9L630.3 543.8M625.3 568.6L629.4 544.3M623.4 567.8L627.6 544.1M621.5 567.0L625.7 544.6M620.5 567.9L624.9 542.8M618.6 567.3L623.0 543.3M617.7 567.4L622.0 544.6M615.8 566.7L620.1 544.8M614.0 565.8L618.3 544.3M612.9 567.4L617.3 544.3M611.1 567.5L615.4 545.0M610.3 565.1L614.6 542.6M608.3 567.3L612.6 542.9M606.5 567.6L610.7 543.3M605.6 566.7L609.7 543.2M603.8 566.4L607.7 542.9M603.0 565.2L606.7 543.3M601.2 566.3L604.8 542.5M599.4 567.2L602.8 541.9M598.5 566.0L601.8 542.6M596.8 564.9L599.8 544.1M595.9 565.5L598.8 544.4M594.2 566.5L596.8 543.8M592.5 564.9L594.8 542.8M591.7 565.9L593.8 543.1M590.1 566.3L591.6 541.7M588.5 566.7L589.7 543.3M587.7 567.2L588.7 543.9M586.0 566.3L586.5 542.9M585.1 565.7L585.6 543.9M583.9 568.5L583.6 544.5M582.3 568.3L581.2 543.0M581.5 567.7L580.6 545.7M579.8 567.2L578.1 543.6M578.4 567.8L576.3 545.5M577.6 568.0L575.0 544.7M576.6 569.8L572.9 545.3M574.6 568.3L571.1 547.0M574.3 570.0L569.7 546.1M573.1 571.0L567.3 546.0M572.4 571.2L566.7 547.6M571.3 571.5L564.5 548.5M570.2 571.8L561.5 548.5M569.0 570.4L561.3 551.0M569.8 572.9L557.8 550.9M568.2 571.6L555.6 553.2M569.8 573.4L553.8 553.8M568.1 572.0L551.9 556.9M567.8 572.5L550.8 560.0M570.0 574.6L548.2 561.8M567.4 574.2L549.1 563.5M569.2 576.9L548.1 565.4M568.7 577.8L548.0 566.3M565.9 579.3L545.6 566.9M565.9 580.8L547.3 568.4M564.8 583.8L547.1 569.5M563.7 584.9L547.0 570.1M561.0 586.7L545.6 570.4M561.4 589.1L546.3 571.7M558.9 591.1L545.4 572.4M557.3 591.6L543.9 571.6M555.5 591.7L543.1 571.3M553.8 594.6L542.5 572.1M551.7 594.2L543.5 574.5M549.5 596.4L542.2 573.9M546.1 596.3L541.6 574.3M544.9 597.6L541.6 575.1M541.8 598.8L541.0 573.4M538.3 599.2L541.1 574.7M535.2 596.4L541.1 575.5M533.6 596.8L541.1 574.8M531.0 594.9L541.1 574.7M528.4 593.7L540.1 576.2M525.5 593.0L540.5 574.6M522.4 592.5L540.3 573.9M522.7 590.0L538.6 575.4M519.3 589.7L538.7 573.9M517.4 587.8L537.6 573.4M518.2 585.4L538.1 572.3M516.0 583.8L535.2 572.9M515.8 582.4L536.8 570.9M512.8 581.4L535.0 570.4M513.9 579.2L533.4 570.5M513.1 576.9L532.5 569.2M510.8 576.8L533.2 567.9M511.7 573.5L533.3 566.1M510.9 572.6L532.7 565.5M510.2 570.4L530.9 564.5M507.2 570.5L530.5 563.8M507.0 568.0L529.2 562.6M506.7 566.9L529.9 561.4M506.0 564.8L528.7 560.2M505.6 563.8L530.3 558.8M507.0 561.2L529.3 557.4M505.1 559.6L527.0 556.4M505.5 558.4L528.0 555.2M504.5 556.7L528.5 553.4M505.0 554.5L525.7 552.3M503.3 554.0L527.0 551.1M504.1 551.9L526.7 549.4M503.8 550.1L527.0 547.5M502.3 549.5L525.8 546.8M502.6 547.7L525.5 545.0M501.3 546.2L526.0 542.9M502.1 545.1L524.0 542.4M500.0 544.0L523.9 540.4M501.0 542.0L523.6 538.5M500.0 541.4L523.8 537.4M499.2 539.9L522.8 535.7M500.6 537.7L523.0 533.5M499.1 537.2L520.9 533.2M499.6 535.3L520.2 531.4M498.5 534.8L522.2 529.6M498.7 532.9L520.6 528.1M495.8 532.1L519.6 526.4M497.2 530.7L518.2 525.8M496.1 529.2L519.2 523.3M494.0 528.3L517.8 521.7M496.3 526.3L518.3 520.4M494.7 525.1L515.5 519.5M494.1 524.4L516.9 517.8M492.4 523.2L514.3 516.7M491.6 521.7L515.3 514.1M491.9 520.6L515.1 513.0M491.6 518.8L512.7 511.9M491.0 518.0L513.2 510.5M489.8 516.6L511.1 509.3M489.1 515.9L512.3 507.6M489.4 513.7L511.1 505.8M488.9 513.0L509.4 505.6M487.9 511.4L510.5 502.6M487.9 509.3L506.9 502.1M485.2 509.8L506.7 501.0M484.8 508.2L507.2 498.1M484.5 507.4L505.5 497.8M484.3 505.8L505.6 494.9M484.2 505.0L503.9 494.6M482.5 504.6L501.8 493.1M483.0 503.5L500.7 492.4M481.5 503.4L501.1 488.5M481.6 502.0L497.4 488.5M480.4 502.9L496.9 487.0M480.7 501.3L494.7 485.1M479.1 503.4L492.9 482.1M479.7 501.2L489.6 481.6M479.5 501.2L487.9 481.6M478.7 502.5L485.0 480.3M477.8 503.1L482.2 480.5M477.3 502.7L481.0 478.7M475.9 502.4L478.5 479.7M475.1 502.8L477.3 478.3M473.2 501.6L475.2 479.5M471.2 503.9L473.4 480.3M470.1 503.6L472.6 481.1M467.8 504.1L471.0 480.4M466.6 502.4L470.2 480.0M464.3 503.5L468.7 478.7M463.2 503.5L468.0 478.5M461.0 503.0L466.3 480.2M458.9 502.6L464.7 480.8M458.1 500.5L463.9 480.8M455.9 500.8L462.4 479.6M454.8 501.1L461.8 478.9M452.7 501.1L460.2 478.3M450.8 500.2L458.3 479.9M450.0 499.0L457.4 479.9M447.8 499.7L455.8 479.2M446.2 498.2L454.6 477.0M445.2 497.9L453.4 478.6M443.2 497.9L452.1 476.5M442.2 498.2L451.4 475.7M440.5 496.9L449.0 477.7M438.3 497.9L447.2 477.3M437.3 498.0L446.3 477.2M435.5 497.5L444.6 476.4M434.0 496.0L443.1 474.8M433.0 496.1L442.1 474.7M431.6 494.2L440.0 475.3M430.6 494.3L439.4 474.0M428.7 493.8L438.1 471.9M426.6 493.9L435.6 474.1M425.7 493.5L434.9 473.3M423.6 493.2L433.2 472.7M422.4 493.8L432.5 472.1M420.9 491.6L430.7 472.1M419.3 493.1L429.8 472.0M417.6 491.6L428.3 471.3M415.9 489.9L427.1 470.0M414.6 490.3L426.9 468.5M413.3 487.8L424.9 469.2M411.0 487.8L423.4 468.8M409.4 488.4L423.0 467.9M407.4 487.4L422.1 466.6M407.5 484.9L420.6 467.9M404.6 485.3L419.1 467.6M403.0 483.5L417.9 466.9M402.9 481.5L418.1 465.5M400.3 481.2L416.4 465.5M399.4 478.7L416.5 463.2M397.0 479.7L416.0 462.7M395.9 477.6L413.7 463.1M394.6 475.9L413.9 460.6M393.9 475.1L412.1 461.3M393.1 473.0L410.8 460.2M391.3 473.3L410.4 459.5M390.4 471.4L408.9 458.5M389.3 469.9L407.4 457.4M387.7 470.1L407.5 456.0M388.1 467.2L406.5 454.3M386.8 467.2L404.9 454.5M385.4 466.1L404.3 452.3M384.7 464.5L403.8 449.9M383.4 464.7L401.9 450.3M383.6 462.2L401.2 447.9M382.1 462.7L399.8 447.8M381.1 461.4L398.4 446.2M380.6 459.5L396.6 445.1M379.4 459.5L396.5 443.7M378.1 458.3L394.4 443.1M375.4 458.8L392.9 442.0M375.5 457.2L392.1 441.5M374.3 455.6L390.4 440.8M372.5 456.2L389.3 440.7M371.9 453.8L388.3 439.3M370.9 451.9L387.1 438.1M370.0 451.3L387.7 436.4M368.1 450.1L386.4 435.5M366.4 448.6L384.3 435.5M364.5 448.9L385.0 433.9M363.5 446.5L384.1 432.8M363.0 445.4L382.3 433.4M362.7 442.7L382.8 431.1M361.7 442.1L382.1 430.6M359.3 441.3L381.2 429.1M359.5 438.8L379.5 428.0M357.5 439.1L378.8 427.3M356.1 438.0L376.5 426.4M355.8 437.2L376.3 425.2M357.0 434.4L376.1 422.5M355.5 433.9L374.0 421.0M354.9 433.7L372.6 420.7M353.4 433.7L371.8 417.7M353.1 433.4L370.7 416.9M352.0 433.7L368.3 415.2M352.0 432.6L365.5 414.2M351.5 432.8L365.0 412.1M350.9 431.9L361.6 412.7M349.6 432.6L359.6 410.6M348.8 433.2L358.6 409.3M348.1 431.1L356.1 408.7M346.3 432.6L353.3 410.8M345.9 430.4L352.2 410.3M344.1 431.8L350.3 408.6M343.4 430.8L349.2 408.0M341.8 430.5L347.2 407.2M341.0 430.1L346.0 408.3M339.2 431.1L344.1 407.1M337.3 431.7L342.1 407.0M336.5 430.9L340.9 409.3M334.7 430.4L339.1 407.6M333.8 429.3L338.1 408.5M332.0 429.3L336.4 407.0M329.9 431.5L334.5 408.1M329.1 429.5L333.6 408.8M327.1 428.8L331.9 408.4M325.1 429.1L330.4 407.1M324.1 428.6L329.6 406.7M322.1 428.3L328.2 405.6M319.7 430.0L326.6 406.7M318.6 429.8L325.8 406.9M316.6 428.4L324.5 406.3M314.4 428.0L323.4 405.5M313.3 427.7L322.6 406.1M311.4 426.0L321.1 406.5M309.2 425.2L320.0 406.0M307.9 425.4L320.1 404.0M305.2 425.2L318.2 405.5M303.9 422.4L318.0 403.4M301.9 423.4L316.4 405.0M301.1 420.1L316.1 403.0M298.6 419.6L315.1 401.9M297.2 419.4L313.5 403.0M296.1 417.1L313.1 401.0M295.7 415.7L312.9 400.1M292.4 416.0L310.5 400.4M292.9 413.7L311.0 398.7M290.0 413.6L308.9 398.5M289.1 412.8L309.5 396.7M288.3 410.6L308.1 395.7M287.0 410.2L306.6 396.0M286.0 408.2L306.5 393.6M284.0 407.2L303.3 394.2M284.1 405.7L303.9 392.4M282.3 404.5L303.1 390.7M283.2 402.4L301.5 390.9M280.0 402.4L299.8 390.1M279.6 401.4L300.7 388.3M279.1 399.2L298.6 387.7M277.7 397.8L299.1 385.2M278.0 396.3L296.8 385.9M276.4 395.0L295.6 384.7M276.6 393.7L295.8 383.5M274.5 392.7L295.8 381.5M272.9 391.4L294.9 380.1M272.3 390.6L293.3 380.2M270.7 389.3L292.7 378.6M269.7 387.6L292.0 377.2M269.4 386.6L292.1 376.2M268.2 385.0L290.5 375.2M267.2 383.3L291.0 373.1M268.0 380.6L289.3 372.2M265.8 380.7L289.5 371.2M265.4 378.6L288.7 369.8M265.9 376.2L288.2 368.2M263.5 376.3L286.9 367.9M263.8 373.9L285.3 366.9M262.5 372.3L285.5 365.0M262.1 371.4L286.0 363.8M261.6 369.5L284.7 362.6M262.0 368.2L282.5 362.6M261.2 366.4L283.2 360.5M259.4 364.9L282.8 358.8M259.5 363.8L282.2 358.1M258.1 362.1L280.9 356.7M259.6 360.5L280.4 356.0M258.6 358.7L281.0 353.8M257.1 357.0L279.4 352.5M255.8 356.3L280.3 351.2M255.8 354.0L279.7 349.6M257.2 352.3L278.5 349.2M256.6 350.1L279.0 347.4M254.7 349.3L279.3 346.6M253.9 346.9L276.7 345.8M255.1 345.4L277.8 345.0M254.2 342.9L278.8 343.8M252.9 340.1L277.3 343.1M254.4 338.7L277.7 342.7" fill="none" stroke="#000" stroke-width="1.25"/><path d="M265.8 339.8L266.4 336.3L267.7 333.0L269.3 329.8L271.2 326.6L273.2 323.4L275.1 320.2L276.8 316.8L278.2 313.4L279.4 309.8L280.4 306.2L281.4 302.6L282.3 299.0L283.2 295.4L284.2 291.8L285.3 288.2L286.6 284.7L287.9 281.3L289.4 277.9L290.9 274.6L292.6 271.3L294.3 268.0L296.1 264.8L298.0 261.6L299.9 258.4L302.0 255.3L304.0 252.2L306.1 249.1L308.3 246.0L310.4 243.0L312.6 239.9L314.8 236.9L317.1 233.9L319.4 230.9L321.7 228.0L324.1 225.3L326.7 222.6L329.4 220.2L332.2 218.0L335.2 216.0L338.4 214.1L341.6 212.5L345.0 210.9L348.5 209.5L352.0 208.3L355.6 207.1L359.3 206.0L362.9 205.0L366.6 204.0L370.3 203.0L374.0 202.1L377.7 201.1L381.3 200.1L384.9 199.1L388.5 198.1L392.1 197.1L395.6 196.1L399.2 195.2L402.7 194.2L406.3 193.2L409.8 192.3L413.4 191.3L416.9 190.4L420.5 189.5L424.1 188.7L427.7 187.8L431.4 187.0L435.0 186.3L438.7 185.5L442.3 184.9L446.0 184.2L449.7 183.6L453.4 183.1L457.1 182.6L460.8 182.2L464.5 181.9L468.2 181.6L471.9 181.3L475.6 181.2L479.3 181.1L482.9 181.1L486.6 181.2L490.3 181.3L494.0 181.6L497.7 181.9L501.3 182.3L505.0 182.9L508.6 183.5L512.2 184.2L515.8 185.0L519.4 185.9L523.0 186.9L526.6 187.9L530.2 188.9L533.7 190.0L537.3 191.1L540.9 192.2L544.5 193.3L548.1 194.3L551.7 195.4L555.3 196.3L558.9 197.3L562.6 198.1L566.2 199.0L569.9 199.8L573.5 200.7L577.1 201.5L580.7 202.4L584.3 203.3L587.9 204.3L591.4 205.4L594.9 206.5L598.3 207.7L601.8 209.0L605.1 210.4L608.5 211.9L611.8 213.5L615.0 215.1L618.3 216.8L621.5 218.6L624.8 220.4L628.0 222.2L631.3 224.0L634.5 225.9L637.8 227.8L641.0 229.7L644.2 231.6L647.4 233.6L650.6 235.6L653.8 237.7L656.9 239.7L660.0 241.9L663.1 244.0L666.1 246.3L669.1 248.5L672.0 250.8L674.9 253.2L677.7 255.7L680.4 258.1L683.0 260.7L685.6 263.3L688.1 266.0L690.5 268.8L692.8 271.6L695.1 274.5L697.2 277.5L699.3 280.5L701.2 283.6L703.1 286.7L705.0 289.9L706.7 293.2L708.4 296.5L710.0 299.8L711.6 303.2L713.1 306.6L714.6 310.1L716.0 313.5L717.4 317.0L718.7 320.5L720.0 324.1L721.3 327.6L722.5 331.1L723.8 334.7L725.0 338.2L726.1 341.7L727.3 345.3L728.4 348.8L729.5 352.4L730.6 355.9L731.7 359.5L732.7 363.0L733.7 366.6L734.6 370.2L735.6 373.7L736.4 377.3L737.3 380.9L738.1 384.5L738.9 388.1L739.6 391.7L740.3 395.3L740.9 398.9L741.5 402.6L742.1 406.2L742.6 409.9L743.0 413.6L743.4 417.3L743.8 421.0L744.1 424.7L744.3 428.4L744.5 432.2L744.6 435.9L744.6 439.7L744.5 443.4L744.1 447.1L743.4 450.7L742.4 454.2L740.9 457.6L739.2 460.9L737.1 464.0L734.8 467.0L732.2 469.8L729.4 472.5L726.3 474.9L723.2 477.2L720.0 479.4L716.9 481.6L714.0 483.8L711.3 486.3L709.0 489.0L707.3 492.0L705.9 495.3L704.9 498.9L704.1 502.6L703.3 506.3L702.5 510.1L701.5 513.7L700.2 517.2L698.7 520.6L696.9 523.8L695.0 526.9L692.8 529.9L690.4 532.7L687.9 535.5L685.2 538.2L682.3 540.7L679.3 543.1L676.1 545.4L672.9 547.4L669.6 549.2L666.2 550.8L662.8 552.1L659.3 553.2L655.8 554.1L652.2 554.8L648.6 555.3L645.0 555.7L641.3 555.9L637.6 556.0L633.9 556.0L630.2 555.9L626.4 555.8L622.7 555.6L618.9 555.4L615.2 555.2L611.4 554.9L607.7 554.8L603.9 554.6L600.2 554.5L596.4 554.5L592.7 554.6L589.1 554.8L585.4 555.2L581.8 555.7L578.2 556.4L574.7 557.3L571.1 558.3L567.7 559.7L564.5 561.3L561.7 563.6L559.7 566.4L558.2 569.9L556.7 573.5L554.7 577.1L552.2 580.3L549.1 582.9L545.7 584.9L542.3 586.1L538.9 586.4L535.7 585.8L532.7 584.3L529.9 582.2L527.3 579.5L524.9 576.4L522.8 573.0L520.9 569.5L519.3 565.9L518.0 562.3L516.9 558.7L515.9 555.2L515.0 551.7L514.1 548.2L513.2 544.7L512.3 541.2L511.2 537.7L510.1 534.2L508.9 530.8L507.6 527.3L506.2 523.9L504.7 520.4L503.1 517.0L501.5 513.5L499.7 510.1L497.9 506.6L495.9 503.2L493.8 500.0L491.5 497.0L488.9 494.6L486.0 492.7L482.7 491.6L479.1 491.2L475.2 491.3L471.3 491.4L467.5 491.4L463.7 491.1L460.0 490.7L456.4 490.0L452.8 489.3L449.3 488.4L445.7 487.4L442.1 486.4L438.5 485.4L434.9 484.4L431.3 483.3L427.7 482.2L424.1 481.0L420.6 479.7L417.2 478.2L414.0 476.5L410.9 474.5L408.0 472.3L405.2 469.9L402.6 467.3L400.0 464.6L397.5 461.9L395.0 459.1L392.3 456.5L389.6 454.0L386.8 451.6L383.9 449.2L381.0 446.9L378.2 444.4L375.6 441.9L373.1 439.1L370.7 436.0L368.5 432.9L366.2 429.9L363.8 427.1L361.1 424.7L358.0 422.8L354.6 421.5L351.0 420.6L347.2 420.0L343.5 419.5L339.7 419.2L336.0 419.0L332.3 418.8L328.6 418.5L325.0 418.1L321.5 417.5L318.0 416.7L314.6 415.5L311.4 414.0L308.2 412.2L305.1 409.9L302.2 407.4L299.3 404.7L296.6 401.9L294.0 399.0L291.6 396.1L289.2 393.2L287.0 390.3L284.9 387.3L282.8 384.3L280.9 381.3L279.1 378.2L277.3 375.1L275.7 371.9L274.1 368.6L272.6 365.3L271.2 361.8L269.8 358.3L268.5 354.6L267.3 350.9L266.3 347.1L265.8 343.4Z" fill="none" stroke="#000" stroke-width="5"/>
 <g fill="none" stroke="#fff" stroke-width="1.6"><path d="M430.5 174v16M422.5 182.4h16"/></g>
 <rect x="502" y="177.5" width="8" height="7" fill="#f4f4f4"/>
 <g fill="none" stroke="#e01010" stroke-width="1.3"><rect x="465.6" y="346.6" width="12" height="10"/><path d="M471.5 342v19M463.5 351.5h17"/></g>
</svg>
<svg class="abs" style="left:0;top:0" width="1205" height="760"><g fill="none" stroke="#ee1111" stroke-width="2.3" stroke-linecap="round" stroke-linejoin="round"><path d="M197.5 91.3C200.2 93.3 207.0 98.3 213.7 103.2C220.3 108.1 231.3 116.0 237.4 120.5C243.5 125.0 244.4 126.0 250.5 130.0C256.6 134.1 266.8 140.4 274.2 144.8C281.6 149.2 291.4 154.6 294.9 156.6"/><path d="M197.5 91.8C198.5 95.3 200.5 103.9 203.4 112.6C206.3 121.3 211.7 133.9 215.0 143.8C218.3 153.7 221.1 164.2 223.4 172.1C225.7 180.0 227.9 188.0 228.8 191.2"/><path d="M197.8 91.8C199.1 94.0 202.6 98.3 205.8 104.7C209.0 111.1 212.8 119.9 217.0 130.0C221.2 140.1 226.4 155.0 230.8 165.5C235.2 176.0 239.3 181.3 243.6 193.2C247.9 205.0 252.9 225.8 256.4 236.6C259.8 247.4 262.5 253.4 264.3 258.3C266.1 263.2 266.5 264.1 267.3 266.2C268.1 268.3 269.0 270.3 269.3 271.1"/></g></svg>
<div class="dlg"></div>
<span id="tx13" style="position:absolute;left:779.5px;top:366.0px;font-size:12px;color:#000;white-space:pre;letter-spacing:-0.072px;line-height:1;">Stipple</span>
<div class="abs" style="left:1095px;top:357px;width:47px;height:20px;border:1px solid #6b7b8b;border-top:none;border-radius:0 0 4px 4px;background:linear-gradient(#d5e3f1,#c7daee)"></div>
<svg class="abs" style="left:1112.5px;top:361px" width="14" height="12" viewBox="0 0 14 12"><path d="M2.5 2L7 6L11.5 2M2.5 10L7 6L11.5 10" stroke="#3a4550" stroke-width="4.4" fill="none" stroke-linecap="round"/><path d="M2.5 2L7 6L11.5 2M2.5 10L7 6L11.5 10" stroke="#fff" stroke-width="2.2" fill="none" stroke-linecap="round"/></svg>
<div class="abs" style="left:778px;top:386px;width:364px;height:291px;background:#f0f0f0;border:1px solid #5b6c7d"></div>
<div class="abs" style="left:818px;top:415px;width:285px;height:176px;border:1px solid #dcdcdc;box-shadow:inset 1px 1px 0 #fff,1px 1px 0 #fff"></div>
<div class="abs" style="left:823px;top:409px;width:47px;height:12px;background:#f0f0f0"></div>
<span id="tx14" style="position:absolute;left:826.3px;top:410.0px;font-size:11px;color:#000;white-space:pre;letter-spacing:-0.278px;line-height:1;">Stitching</span>
<span id="tx15" style="position:absolute;left:864.4px;top:445.9px;font-size:11px;color:#000;white-space:pre;letter-spacing:-0.120px;line-height:1;">Stitch Length:</span>
<div class="tbx" style="left:949.5px;top:441.4px;width:82.5px;height:22px;border-color:#abadb3 #dbdfe6 #e3e9ef #abadb3"></div>
<div class="spn" style="left:1014.5px;top:443.1px;width:16px;height:9px;background:linear-gradient(#f6f7f9,#e2e5ea);border-color:#b8bcc4"></div>
<div class="spn" style="left:1014.5px;top:453.0px;width:16px;height:9px;background:linear-gradient(#f6f7f9,#e2e5ea);border-color:#b8bcc4"></div>
<svg class="abs" style="left:1019px;top:444.9px" width="7" height="4"><path d="M0 4L3.5 0.5 7 4z" fill="#4d5a86"/></svg>
<svg class="abs" style="left:1019px;top:454.9px" width="7" height="4"><path d="M0 0L3.5 3.5 7 0z" fill="#4d5a86"/></svg>
<span id="tx16" style="position:absolute;left:960.9px;top:446.2px;font-size:11.5px;color:#000;white-space:pre;letter-spacing:-0.373px;line-height:1;">2.50</span>
<span id="tx17" style="position:absolute;left:1047.5px;top:447.2px;font-size:10px;color:#000;white-space:pre;letter-spacing:-0.486px;line-height:1;">mm</span>
<span id="tx18" style="position:absolute;left:889.0px;top:482.7px;font-size:11px;color:#000;white-space:pre;letter-spacing:-0.150px;line-height:1;">Min Len:</span>
<div class="tbx" style="left:949.5px;top:478.2px;width:82.5px;height:22px;border-color:#abadb3 #dbdfe6 #e3e9ef #abadb3"></div>
<div class="spn" style="left:1014.5px;top:479.9px;width:16px;height:9px;background:linear-gradient(#f6f7f9,#e2e5ea);border-color:#b8bcc4"></div>
<div class="spn" style="left:1014.5px;top:489.8px;width:16px;height:9px;background:linear-gradient(#f6f7f9,#e2e5ea);border-color:#b8bcc4"></div>
<svg class="abs" style="left:1019px;top:481.7px" width="7" height="4"><path d="M0 4L3.5 0.5 7 4z" fill="#4d5a86"/></svg>
<svg class="abs" style="left:1019px;top:491.7px" width="7" height="4"><path d="M0 0L3.5 3.5 7 0z" fill="#4d5a86"/></svg>
<span id="tx19" style="position:absolute;left:955.7px;top:483.0px;font-size:11.5px;color:#000;white-space:pre;letter-spacing:-0.523px;line-height:1;">0.80</span>
<span id="tx20" style="position:absolute;left:1047.5px;top:484.0px;font-size:10px;color:#000;white-space:pre;letter-spacing:-0.486px;line-height:1;">mm</span>
<span id="tx21" style="position:absolute;left:875.7px;top:519.5px;font-size:11px;color:#000;white-space:pre;letter-spacing:-0.258px;line-height:1;">Chord Gap:</span>
<div class="tbx" style="left:949.5px;top:515.0px;width:82.5px;height:22px;border-color:#abadb3 #dbdfe6 #e3e9ef #abadb3"></div>
<div class="spn" style="left:1014.5px;top:516.7px;width:16px;height:9px;background:linear-gradient(#f6f7f9,#e2e5ea);border-color:#b8bcc4"></div>
<div class="spn" style="left:1014.5px;top:526.6px;width:16px;height:9px;background:linear-gradient(#f6f7f9,#e2e5ea);border-color:#b8bcc4"></div>
<svg class="abs" style="left:1019px;top:518.5px" width="7" height="4"><path d="M0 4L3.5 0.5 7 4z" fill="#4d5a86"/></svg>
<svg class="abs" style="left:1019px;top:528.5px" width="7" height="4"><path d="M0 0L3.5 3.5 7 0z" fill="#4d5a86"/></svg>
<span id="tx22" style="position:absolute;left:955.7px;top:519.8px;font-size:11.5px;color:#000;white-space:pre;letter-spacing:-0.523px;line-height:1;">0.05</span>
<span id="tx23" style="position:absolute;left:1047.5px;top:520.8px;font-size:10px;color:#000;white-space:pre;letter-spacing:-0.486px;line-height:1;">mm</span>
<span id="tx24" style="position:absolute;left:861.1px;top:557.5px;font-size:11px;color:#000;white-space:pre;letter-spacing:-0.111px;line-height:1;">Loop Spacing:</span>
<div class="tbx" style="left:949.5px;top:553.0px;width:82.5px;height:22px;border-color:#abadb3 #dbdfe6 #e3e9ef #abadb3"></div>
<div class="spn" style="left:1014.5px;top:554.7px;width:16px;height:9px;background:linear-gradient(#f6f7f9,#e2e5ea);border-color:#b8bcc4"></div>
<div class="spn" style="left:1014.5px;top:564.6px;width:16px;height:9px;background:linear-gradient(#f6f7f9,#e2e5ea);border-color:#b8bcc4"></div>
<svg class="abs" style="left:1019px;top:556.5px" width="7" height="4"><path d="M0 4L3.5 0.5 7 4z" fill="#4d5a86"/></svg>
<svg class="abs" style="left:1019px;top:566.5px" width="7" height="4"><path d="M0 0L3.5 3.5 7 0z" fill="#4d5a86"/></svg>
<span id="tx25" style="position:absolute;left:958.2px;top:557.8px;font-size:11.5px;color:#000;white-space:pre;letter-spacing:-0.067px;line-height:1;">3.0</span>
<span id="tx26" style="position:absolute;left:1047.5px;top:558.8px;font-size:10px;color:#000;white-space:pre;letter-spacing:-0.486px;line-height:1;">mm</span>
<span id="tx27" style="position:absolute;left:869.2px;top:610.0px;font-size:11px;color:#000;white-space:pre;letter-spacing:-0.271px;line-height:1;">Replace Original</span>
<div class="abs" style="left:950px;top:610px;width:13px;height:13px;border:1px solid #8e8f8f;background:linear-gradient(#dcdcdc,#f6f6f6)"><svg width="11" height="11" viewBox="0 0 11 11" style="position:absolute;left:0;top:0"><path d="M2 5.5L4.5 8.5L9 1.5" stroke="#3c5aa0" stroke-width="1.6" fill="none"/></svg></div>
<div class="btn" style="left:873.4px;top:643.3px;width:72.2px;height:20px"></div>
<div class="btn" style="left:972.1px;top:643.3px;width:72.2px;height:20px"></div>
<span id="tx28" style="position:absolute;left:901.0px;top:647.0px;font-size:11.5px;color:#000;white-space:pre;letter-spacing:-0.312px;line-height:1;">OK</span>
<span id="tx29" style="position:absolute;left:990.5px;top:647.0px;font-size:11.5px;color:#000;white-space:pre;letter-spacing:-0.135px;line-height:1;">Cancel</span>
</body></html>
